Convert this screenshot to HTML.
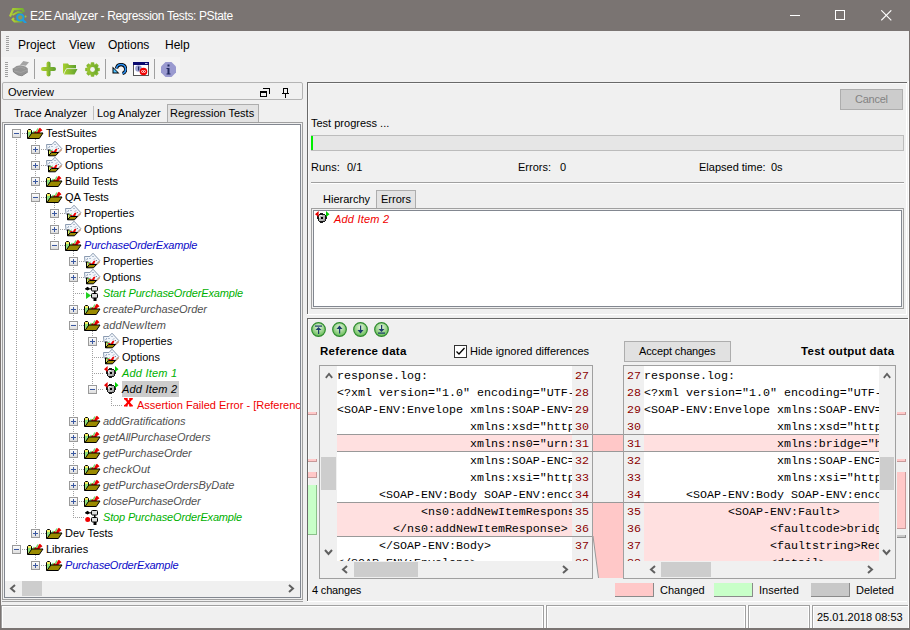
<!DOCTYPE html><html><head><meta charset="utf-8"><style>html,body{margin:0;padding:0;width:910px;height:630px;overflow:hidden;background:#f0f0f0;position:relative}</style></head><body>
<div style="position:absolute;left:0px;top:0px;width:910px;height:31px;background:#7a7472"></div>
<svg style="position:absolute;left:8px;top:7px" width="19" height="16" viewBox="0 0 19 16" shape-rendering="crispEdges"><g shape-rendering="geometricPrecision"><defs><linearGradient id="ga" x1="0" y1="0" x2="1" y2="0"><stop offset="0" stop-color="#b4d232"/><stop offset="1" stop-color="#70b030"/></linearGradient></defs><path d="M2 9.5 L5.2 2.2 L14.5 2.2 L16 5" fill="none" stroke="url(#ga)" stroke-width="2.2"/><path d="M4.5 8 L10 5 L14.5 5.8" fill="none" stroke="url(#ga)" stroke-width="1.8"/><path d="M6 11 L4.6 12.5 L6.5 14.5 L14 14.5" fill="none" stroke="url(#ga)" stroke-width="2"/><circle cx="17.5" cy="9.5" r="1" fill="#a0c830"/><circle cx="12.3" cy="10.5" r="3.2" fill="#a0b838" fill-opacity="0.5" stroke="#1e9ee0" stroke-width="1.8"/><path d="M14.5 12.8 L17.5 15.5" stroke="#1e9ee0" stroke-width="2.2" stroke-linecap="round"/></g></svg>
<div style="position:absolute;left:30px;top:10px;font-family:'Liberation Sans', sans-serif;font-size:12px;line-height:1;font-weight:400;font-style:normal;color:#ffffff;white-space:pre;letter-spacing:-0.37px;">E2E Analyzer - Regression Tests: PState</div>
<div style="position:absolute;left:790px;top:15px;width:10px;height:1px;background:#fff"></div>
<div style="position:absolute;left:835px;top:10px;width:10px;height:10px;border:1px solid #fff;box-sizing:border-box"></div>
<svg style="position:absolute;left:881px;top:10px" width="11" height="11" viewBox="0 0 11 11" shape-rendering="crispEdges"><g shape-rendering="geometricPrecision"><line x1="0.3" y1="0.3" x2="10.3" y2="10.3" stroke="#fff" stroke-width="1.1"/><line x1="10.3" y1="0.3" x2="0.3" y2="10.3" stroke="#fff" stroke-width="1.1"/></g></svg>
<div style="position:absolute;left:6px;top:36px;width:3px;height:1px;background:#a0a0a0"></div>
<div style="position:absolute;left:6px;top:38px;width:3px;height:1px;background:#a0a0a0"></div>
<div style="position:absolute;left:6px;top:40px;width:3px;height:1px;background:#a0a0a0"></div>
<div style="position:absolute;left:6px;top:42px;width:3px;height:1px;background:#a0a0a0"></div>
<div style="position:absolute;left:6px;top:44px;width:3px;height:1px;background:#a0a0a0"></div>
<div style="position:absolute;left:6px;top:46px;width:3px;height:1px;background:#a0a0a0"></div>
<div style="position:absolute;left:6px;top:48px;width:3px;height:1px;background:#a0a0a0"></div>
<div style="position:absolute;left:6px;top:50px;width:3px;height:1px;background:#a0a0a0"></div>
<div style="position:absolute;left:18px;top:39px;font-family:'Liberation Sans', sans-serif;font-size:12px;line-height:1;font-weight:400;font-style:normal;color:#000;white-space:pre;">Project</div>
<div style="position:absolute;left:69px;top:39px;font-family:'Liberation Sans', sans-serif;font-size:12px;line-height:1;font-weight:400;font-style:normal;color:#000;white-space:pre;">View</div>
<div style="position:absolute;left:108px;top:39px;font-family:'Liberation Sans', sans-serif;font-size:12px;line-height:1;font-weight:400;font-style:normal;color:#000;white-space:pre;">Options</div>
<div style="position:absolute;left:165px;top:39px;font-family:'Liberation Sans', sans-serif;font-size:12px;line-height:1;font-weight:400;font-style:normal;color:#000;white-space:pre;">Help</div>
<div style="position:absolute;left:1px;top:57px;width:179px;height:24px;background:#f4f4f4"></div>
<div style="position:absolute;left:5px;top:62px;width:3px;height:1px;background:#a0a0a0"></div>
<div style="position:absolute;left:5px;top:64px;width:3px;height:1px;background:#a0a0a0"></div>
<div style="position:absolute;left:5px;top:66px;width:3px;height:1px;background:#a0a0a0"></div>
<div style="position:absolute;left:5px;top:68px;width:3px;height:1px;background:#a0a0a0"></div>
<div style="position:absolute;left:5px;top:70px;width:3px;height:1px;background:#a0a0a0"></div>
<div style="position:absolute;left:5px;top:72px;width:3px;height:1px;background:#a0a0a0"></div>
<div style="position:absolute;left:5px;top:74px;width:3px;height:1px;background:#a0a0a0"></div>
<div style="position:absolute;left:5px;top:76px;width:3px;height:1px;background:#a0a0a0"></div>
<div style="position:absolute;left:34px;top:59px;width:1px;height:20px;background:#a0a0a0"></div>
<div style="position:absolute;left:105px;top:59px;width:1px;height:20px;background:#a0a0a0"></div>
<div style="position:absolute;left:154px;top:59px;width:1px;height:20px;background:#a0a0a0"></div>
<svg style="position:absolute;left:12px;top:60px" width="18" height="17" viewBox="0 0 18 17" shape-rendering="crispEdges"><g shape-rendering="geometricPrecision"><path d="M8 5 L11.3 1 L17 2.3 L13.9 5.8 Z" fill="#a4a4a4"/><path d="M1 8.5 L4.5 6 L8.5 5.2 L13.5 6.5 L15.8 8.5 L15.8 12 L10 15.8 L6 15 L1.5 12 Z" fill="#949494"/><path d="M3 8.5 L8.5 7 L13 8.5 M2 11 L9 12.5 L15 10" fill="none" stroke="#a6a6a6" stroke-width="0.8"/><path d="M1 8.5 L1.5 12 L6 15 L10 15.8 L15.8 12" fill="none" stroke="#808080" stroke-width="0.9"/></g></svg>
<svg style="position:absolute;left:41px;top:61px" width="15" height="16" viewBox="0 0 15 16" shape-rendering="crispEdges"><g shape-rendering="geometricPrecision"><defs><linearGradient id="gp" x1="0" y1="0" x2="1" y2="0"><stop offset="0" stop-color="#b0d030"/><stop offset="1" stop-color="#5ea02e"/></linearGradient></defs><rect x="5.5" y="0.5" width="4" height="15" rx="2" fill="url(#gp)"/><rect x="0" y="6" width="15" height="4" rx="2" fill="url(#gp)"/></g></svg>
<svg style="position:absolute;left:63px;top:63px" width="15" height="12" viewBox="0 0 15 12" shape-rendering="crispEdges"><g shape-rendering="geometricPrecision"><defs><linearGradient id="gf" x1="0" y1="0" x2="1" y2="0"><stop offset="0" stop-color="#a8d030"/><stop offset="1" stop-color="#5ea02e"/></linearGradient></defs><path d="M0 0.5 L5 0.5 L6 2 L13 2 L13 6 L0 11 Z" fill="url(#gf)"/><path d="M1 11.5 L4 6 L14.5 6 L11.5 11.5 Z" fill="url(#gf)"/><path d="M0.5 11 L3.6 5.6 L13 5.6" fill="none" stroke="#f4f4f4" stroke-width="0.8"/></g></svg>
<svg style="position:absolute;left:85px;top:62px" width="15" height="15" viewBox="0 0 15 15" shape-rendering="crispEdges"><g shape-rendering="geometricPrecision"><defs><linearGradient id="gg" gradientUnits="userSpaceOnUse" x1="-7" y1="0" x2="7" y2="0"><stop offset="0" stop-color="#a8cc30"/><stop offset="1" stop-color="#62a42e"/></linearGradient></defs><g transform="translate(7.5,7.5)"><rect x="-1.8" y="-7.3" width="3.6" height="14.6" rx="0.8" fill="url(#gg)" transform="rotate(0)"/><rect x="-1.8" y="-7.3" width="3.6" height="14.6" rx="0.8" fill="url(#gg)" transform="rotate(45)"/><rect x="-1.8" y="-7.3" width="3.6" height="14.6" rx="0.8" fill="url(#gg)" transform="rotate(90)"/><rect x="-1.8" y="-7.3" width="3.6" height="14.6" rx="0.8" fill="url(#gg)" transform="rotate(135)"/><circle r="5.6" fill="url(#gg)"/><circle r="2.4" fill="#f4f4f4"/></g></g></svg>
<svg style="position:absolute;left:112px;top:63px" width="15" height="12" viewBox="0 0 15 12" shape-rendering="crispEdges"><g shape-rendering="geometricPrecision"><path d="M4.5 5.5 A4.6 4.6 0 1 1 10.5 10.5" fill="none" stroke="#000" stroke-width="3.2"/><path d="M4.5 5.5 A4.6 4.6 0 1 1 10.5 10.5" fill="none" stroke="#2a8ef0" stroke-width="1.6"/><path d="M0.5 3.5 L0.5 10.5 L7.5 10.5 Z" fill="#000"/><path d="M1.5 5.5 L1.5 9.5 L5.5 9.5 Z" fill="#50c0ff"/></g></svg>
<svg style="position:absolute;left:133px;top:62px" width="16" height="14" viewBox="0 0 16 14" shape-rendering="crispEdges"><g shape-rendering="geometricPrecision"><rect x="0.5" y="0.5" width="15" height="13" fill="#fff" stroke="#555" stroke-width="1"/><rect x="0" y="0" width="16" height="3" fill="#0a0a6e"/><rect x="12" y="1" width="2.5" height="1" fill="#c0c0e0"/><circle cx="5.5" cy="6.5" r="3.3" fill="#9aa0d0"/><rect x="5" y="4.5" width="1.2" height="4" fill="#222a60"/><circle cx="10.5" cy="9.5" r="3.8" fill="#f00000"/><path d="M8.5 9.5 a1 1 0 1 0 2 0 a1 1 0 1 0 -2 0 M10.5 9.5 a1 1 0 1 0 2 0 a1 1 0 1 0 -2 0" fill="none" stroke="#fff" stroke-width="0.8"/></g></svg>
<svg style="position:absolute;left:161px;top:62px" width="15" height="15" viewBox="0 0 15 15" shape-rendering="crispEdges"><g shape-rendering="geometricPrecision"><path d="M4.5 0 L10.5 0 L15 4.5 L15 10.5 L10.5 15 L4.5 15 L0 10.5 L0 4.5 Z" fill="#9a9ad0"/><rect x="6.5" y="2.5" width="2" height="2" fill="#222a60"/><path d="M5.5 6 L8.5 6 L8.5 11.5 L9.5 11.5 L9.5 12.5 L5.5 12.5 L5.5 11.5 L6.5 11.5 L6.5 7 L5.5 7 Z" fill="#222a60"/></g></svg>
<div style="position:absolute;left:2px;top:82px;width:301px;height:18px;border:1px solid #b4b4b4;box-sizing:border-box;border-radius:2px;background:#f0f0f0"></div>
<div style="position:absolute;left:8px;top:87px;font-family:'Liberation Sans', sans-serif;font-size:11px;line-height:1;font-weight:400;font-style:normal;color:#000;white-space:pre;">Overview</div>
<div style="position:absolute;left:263px;top:88px;width:7px;height:1px;background:#000"></div>
<div style="position:absolute;left:269px;top:88px;width:1px;height:6px;background:#000"></div>
<div style="position:absolute;left:260px;top:91px;width:7px;height:2px;background:#000"></div>
<div style="position:absolute;left:260px;top:91px;width:1px;height:6px;background:#000"></div>
<div style="position:absolute;left:266px;top:91px;width:1px;height:6px;background:#000"></div>
<div style="position:absolute;left:260px;top:96px;width:7px;height:1px;background:#000"></div>
<div style="position:absolute;left:283px;top:88px;width:5px;height:1px;background:#000"></div>
<div style="position:absolute;left:283px;top:88px;width:1px;height:6px;background:#000"></div>
<div style="position:absolute;left:287px;top:88px;width:1px;height:6px;background:#000"></div>
<div style="position:absolute;left:282px;top:93px;width:7px;height:1px;background:#000"></div>
<div style="position:absolute;left:285px;top:94px;width:1px;height:4px;background:#000"></div>
<div style="position:absolute;left:14px;top:108px;font-family:'Liberation Sans', sans-serif;font-size:11px;line-height:1;font-weight:400;font-style:normal;color:#000;white-space:pre;">Trace Analyzer</div>
<div style="position:absolute;left:93px;top:106px;width:1px;height:14px;background:#c0c0c0"></div>
<div style="position:absolute;left:97px;top:108px;font-family:'Liberation Sans', sans-serif;font-size:11px;line-height:1;font-weight:400;font-style:normal;color:#000;white-space:pre;">Log Analyzer</div>
<div style="position:absolute;left:167px;top:104px;width:92px;height:19px;background:#e3e3e3;border:1px solid #adadad;border-bottom:none;box-sizing:border-box"></div>
<div style="position:absolute;left:170px;top:108px;font-family:'Liberation Sans', sans-serif;font-size:11px;line-height:1;font-weight:400;font-style:normal;color:#000;white-space:pre;">Regression Tests</div>
<div style="position:absolute;left:2px;top:122px;width:301px;height:478px;border:1px solid #a0a0a0;box-sizing:border-box"></div>
<div style="position:absolute;left:4px;top:124px;width:297px;height:474px;border:1px solid #828790;box-sizing:border-box;background:#fff"></div>
<div style="position:absolute;left:2px;top:601px;width:301px;height:1px;background:#a0a0a0"></div>
<div style="position:absolute;left:5px;top:581px;width:295px;height:16px;background:#f0f0f0"></div>
<svg style="position:absolute;left:9px;top:584px" width="8" height="9" viewBox="0 0 8 9" shape-rendering="crispEdges"><path d="M6 1 L2 4.5 L6 8" fill="none" stroke="#606060" stroke-width="2" shape-rendering="geometricPrecision"/></svg>
<div style="position:absolute;left:22px;top:581px;width:20px;height:15px;background:#cdcdcd"></div>
<svg style="position:absolute;left:287px;top:584px" width="8" height="9" viewBox="0 0 8 9" shape-rendering="crispEdges"><path d="M2 1 L6 4.5 L2 8" fill="none" stroke="#606060" stroke-width="2" shape-rendering="geometricPrecision"/></svg>
<div style="position:absolute;left:5px;top:125px;width:295px;height:455px;overflow:hidden">
<div style="position:absolute;left:30px;top:14px;width:1px;height:395px;background:repeating-linear-gradient(to bottom,#a0a0a0 0 1px,transparent 1px 2px)"></div>
<div style="position:absolute;left:49px;top:78px;width:1px;height:43px;background:repeating-linear-gradient(to bottom,#a0a0a0 0 1px,transparent 1px 2px)"></div>
<div style="position:absolute;left:68px;top:126px;width:1px;height:267px;background:repeating-linear-gradient(to bottom,#a0a0a0 0 1px,transparent 1px 2px)"></div>
<div style="position:absolute;left:87px;top:206px;width:1px;height:59px;background:repeating-linear-gradient(to bottom,#a0a0a0 0 1px,transparent 1px 2px)"></div>
<div style="position:absolute;left:106px;top:272px;width:1px;height:9px;background:repeating-linear-gradient(to bottom,#a0a0a0 0 1px,transparent 1px 2px)"></div>
<div style="position:absolute;left:30px;top:430px;width:1px;height:11px;background:repeating-linear-gradient(to bottom,#a0a0a0 0 1px,transparent 1px 2px)"></div>
<div style="position:absolute;left:11px;top:14px;width:1px;height:405px;background:repeating-linear-gradient(to bottom,#a0a0a0 0 1px,transparent 1px 2px)"></div>
<div style="position:absolute;left:11px;top:8px;width:11px;height:1px;background:repeating-linear-gradient(to right,#a0a0a0 0 1px,transparent 1px 2px)"></div>
<svg style="position:absolute;left:7px;top:4px" width="9" height="9" viewBox="0 0 9 9" shape-rendering="crispEdges"><defs><linearGradient id="eg" x1="0" y1="0" x2="0" y2="1"><stop offset="0" stop-color="#fff"/><stop offset="1" stop-color="#dcdcdc"/></linearGradient></defs><rect x="0.5" y="0.5" width="8" height="8" rx="1" fill="url(#eg)" stroke="#9a9a9a"/><rect x="2" y="4" width="5" height="1" fill="#3a58a0"/></svg>
<svg style="position:absolute;left:22px;top:2px" width="17" height="13" viewBox="0 0 17 13" shape-rendering="crispEdges"><g shape-rendering="geometricPrecision"><path d="M0.5 3.5 L1.5 2.5 L3.5 2.5 L4.5 3.5 L4.5 11.5 L0.5 11.5 Z" fill="#f8f060" stroke="#000" stroke-width="1"/><path d="M1.2 5 L3.8 5 L3.8 9.5 L1.2 9.5 Z" fill="#80e080"/><path d="M4 8 L7 4.5 L8.5 6 L11 1.5" fill="none" stroke="#70e070" stroke-width="1.5"/><path d="M6.5 6.5 L8.5 4 L9.8 5.5 L12 1.5 L13 0.8 L15.5 3.3 L13 5 L12.5 6.5 Z" fill="#e80000"/><path d="M1 11.5 L4.8 6 L16 6 L12.3 11.5 Z" fill="#9a8a00" stroke="#000" stroke-width="1"/></g></svg>
<div style="position:absolute;left:41px;top:3px;font-family:'Liberation Sans', sans-serif;font-size:11px;line-height:1;font-weight:400;font-style:normal;color:#000;white-space:pre;">TestSuites</div>
<div style="position:absolute;left:30px;top:24px;width:11px;height:1px;background:repeating-linear-gradient(to right,#a0a0a0 0 1px,transparent 1px 2px)"></div>
<svg style="position:absolute;left:26px;top:20px" width="9" height="9" viewBox="0 0 9 9" shape-rendering="crispEdges"><defs><linearGradient id="eg" x1="0" y1="0" x2="0" y2="1"><stop offset="0" stop-color="#fff"/><stop offset="1" stop-color="#dcdcdc"/></linearGradient></defs><rect x="0.5" y="0.5" width="8" height="8" rx="1" fill="url(#eg)" stroke="#9a9a9a"/><rect x="2" y="4" width="5" height="1" fill="#3a58a0"/><rect x="4" y="2" width="1" height="5" fill="#3a58a0"/></svg>
<svg style="position:absolute;left:41px;top:15px" width="17" height="17" viewBox="0 0 17 17" shape-rendering="crispEdges"><g shape-rendering="geometricPrecision"><path d="M0.5 4.5 L6 4.5 L9 1.2 L15.8 8.6 L12 12.5 L1 10 Z" fill="#f2f6fb" stroke="#8a9ab0" stroke-width="1"/><path d="M2.5 7.5 L4 6.5 M6 6 L6 7 M8.5 5 L9.5 4 M10 7.5 L11 6.5 M12 9 L13 8" stroke="#7088a8" stroke-width="1"/><path d="M12 12.5 L15.8 8.6 L15.8 10.5 L12.5 13.5 Z" fill="#c89878"/><path d="M2 9.5 L4.5 9.5 L4.5 16 L2 16 Z" fill="#000"/><path d="M3 10.5 L4.3 10.5 L4.3 14 L3 14 Z" fill="#d8e860"/><path d="M4.5 12 L6 10.5 L7.5 12 L9.5 9 L11.5 8.5 L10 12.5 Z" fill="#ee0000"/><path d="M4 11.5 L6.5 9.8" stroke="#60e060" stroke-width="1"/><path d="M2.5 15.8 L5.5 12.5 L12.5 12.5 L9.5 15.8 Z" fill="#9a8a00" stroke="#000" stroke-width="1"/></g></svg>
<div style="position:absolute;left:60px;top:19px;font-family:'Liberation Sans', sans-serif;font-size:11px;line-height:1;font-weight:400;font-style:normal;color:#000;white-space:pre;">Properties</div>
<div style="position:absolute;left:30px;top:40px;width:11px;height:1px;background:repeating-linear-gradient(to right,#a0a0a0 0 1px,transparent 1px 2px)"></div>
<svg style="position:absolute;left:26px;top:36px" width="9" height="9" viewBox="0 0 9 9" shape-rendering="crispEdges"><defs><linearGradient id="eg" x1="0" y1="0" x2="0" y2="1"><stop offset="0" stop-color="#fff"/><stop offset="1" stop-color="#dcdcdc"/></linearGradient></defs><rect x="0.5" y="0.5" width="8" height="8" rx="1" fill="url(#eg)" stroke="#9a9a9a"/><rect x="2" y="4" width="5" height="1" fill="#3a58a0"/><rect x="4" y="2" width="1" height="5" fill="#3a58a0"/></svg>
<svg style="position:absolute;left:41px;top:31px" width="17" height="17" viewBox="0 0 17 17" shape-rendering="crispEdges"><g shape-rendering="geometricPrecision"><path d="M0.5 4.5 L6 4.5 L9 1.2 L15.8 8.6 L12 12.5 L1 10 Z" fill="#f2f6fb" stroke="#8a9ab0" stroke-width="1"/><path d="M2.5 7.5 L4 6.5 M6 6 L6 7 M8.5 5 L9.5 4 M10 7.5 L11 6.5 M12 9 L13 8" stroke="#7088a8" stroke-width="1"/><path d="M12 12.5 L15.8 8.6 L15.8 10.5 L12.5 13.5 Z" fill="#c89878"/><path d="M2 9.5 L4.5 9.5 L4.5 16 L2 16 Z" fill="#000"/><path d="M3 10.5 L4.3 10.5 L4.3 14 L3 14 Z" fill="#d8e860"/><path d="M4.5 12 L6 10.5 L7.5 12 L9.5 9 L11.5 8.5 L10 12.5 Z" fill="#ee0000"/><path d="M4 11.5 L6.5 9.8" stroke="#60e060" stroke-width="1"/><path d="M2.5 15.8 L5.5 12.5 L12.5 12.5 L9.5 15.8 Z" fill="#9a8a00" stroke="#000" stroke-width="1"/></g></svg>
<div style="position:absolute;left:60px;top:35px;font-family:'Liberation Sans', sans-serif;font-size:11px;line-height:1;font-weight:400;font-style:normal;color:#000;white-space:pre;">Options</div>
<div style="position:absolute;left:30px;top:56px;width:11px;height:1px;background:repeating-linear-gradient(to right,#a0a0a0 0 1px,transparent 1px 2px)"></div>
<svg style="position:absolute;left:26px;top:52px" width="9" height="9" viewBox="0 0 9 9" shape-rendering="crispEdges"><defs><linearGradient id="eg" x1="0" y1="0" x2="0" y2="1"><stop offset="0" stop-color="#fff"/><stop offset="1" stop-color="#dcdcdc"/></linearGradient></defs><rect x="0.5" y="0.5" width="8" height="8" rx="1" fill="url(#eg)" stroke="#9a9a9a"/><rect x="2" y="4" width="5" height="1" fill="#3a58a0"/><rect x="4" y="2" width="1" height="5" fill="#3a58a0"/></svg>
<svg style="position:absolute;left:41px;top:50px" width="17" height="13" viewBox="0 0 17 13" shape-rendering="crispEdges"><g shape-rendering="geometricPrecision"><path d="M0.5 3.5 L1.5 2.5 L3.5 2.5 L4.5 3.5 L4.5 11.5 L0.5 11.5 Z" fill="#f8f060" stroke="#000" stroke-width="1"/><path d="M1.2 5 L3.8 5 L3.8 9.5 L1.2 9.5 Z" fill="#80e080"/><path d="M4 8 L7 4.5 L8.5 6 L11 1.5" fill="none" stroke="#70e070" stroke-width="1.5"/><path d="M6.5 6.5 L8.5 4 L9.8 5.5 L12 1.5 L13 0.8 L15.5 3.3 L13 5 L12.5 6.5 Z" fill="#e80000"/><path d="M1 11.5 L4.8 6 L16 6 L12.3 11.5 Z" fill="#9a8a00" stroke="#000" stroke-width="1"/></g></svg>
<div style="position:absolute;left:60px;top:51px;font-family:'Liberation Sans', sans-serif;font-size:11px;line-height:1;font-weight:400;font-style:normal;color:#000;white-space:pre;">Build Tests</div>
<div style="position:absolute;left:30px;top:72px;width:11px;height:1px;background:repeating-linear-gradient(to right,#a0a0a0 0 1px,transparent 1px 2px)"></div>
<svg style="position:absolute;left:26px;top:68px" width="9" height="9" viewBox="0 0 9 9" shape-rendering="crispEdges"><defs><linearGradient id="eg" x1="0" y1="0" x2="0" y2="1"><stop offset="0" stop-color="#fff"/><stop offset="1" stop-color="#dcdcdc"/></linearGradient></defs><rect x="0.5" y="0.5" width="8" height="8" rx="1" fill="url(#eg)" stroke="#9a9a9a"/><rect x="2" y="4" width="5" height="1" fill="#3a58a0"/></svg>
<svg style="position:absolute;left:41px;top:66px" width="17" height="13" viewBox="0 0 17 13" shape-rendering="crispEdges"><g shape-rendering="geometricPrecision"><path d="M0.5 3.5 L1.5 2.5 L3.5 2.5 L4.5 3.5 L4.5 11.5 L0.5 11.5 Z" fill="#f8f060" stroke="#000" stroke-width="1"/><path d="M1.2 5 L3.8 5 L3.8 9.5 L1.2 9.5 Z" fill="#80e080"/><path d="M4 8 L7 4.5 L8.5 6 L11 1.5" fill="none" stroke="#70e070" stroke-width="1.5"/><path d="M6.5 6.5 L8.5 4 L9.8 5.5 L12 1.5 L13 0.8 L15.5 3.3 L13 5 L12.5 6.5 Z" fill="#e80000"/><path d="M1 11.5 L4.8 6 L16 6 L12.3 11.5 Z" fill="#9a8a00" stroke="#000" stroke-width="1"/></g></svg>
<div style="position:absolute;left:60px;top:67px;font-family:'Liberation Sans', sans-serif;font-size:11px;line-height:1;font-weight:400;font-style:normal;color:#000;white-space:pre;">QA Tests</div>
<div style="position:absolute;left:49px;top:88px;width:11px;height:1px;background:repeating-linear-gradient(to right,#a0a0a0 0 1px,transparent 1px 2px)"></div>
<svg style="position:absolute;left:45px;top:84px" width="9" height="9" viewBox="0 0 9 9" shape-rendering="crispEdges"><defs><linearGradient id="eg" x1="0" y1="0" x2="0" y2="1"><stop offset="0" stop-color="#fff"/><stop offset="1" stop-color="#dcdcdc"/></linearGradient></defs><rect x="0.5" y="0.5" width="8" height="8" rx="1" fill="url(#eg)" stroke="#9a9a9a"/><rect x="2" y="4" width="5" height="1" fill="#3a58a0"/><rect x="4" y="2" width="1" height="5" fill="#3a58a0"/></svg>
<svg style="position:absolute;left:60px;top:79px" width="17" height="17" viewBox="0 0 17 17" shape-rendering="crispEdges"><g shape-rendering="geometricPrecision"><path d="M0.5 4.5 L6 4.5 L9 1.2 L15.8 8.6 L12 12.5 L1 10 Z" fill="#f2f6fb" stroke="#8a9ab0" stroke-width="1"/><path d="M2.5 7.5 L4 6.5 M6 6 L6 7 M8.5 5 L9.5 4 M10 7.5 L11 6.5 M12 9 L13 8" stroke="#7088a8" stroke-width="1"/><path d="M12 12.5 L15.8 8.6 L15.8 10.5 L12.5 13.5 Z" fill="#c89878"/><path d="M2 9.5 L4.5 9.5 L4.5 16 L2 16 Z" fill="#000"/><path d="M3 10.5 L4.3 10.5 L4.3 14 L3 14 Z" fill="#d8e860"/><path d="M4.5 12 L6 10.5 L7.5 12 L9.5 9 L11.5 8.5 L10 12.5 Z" fill="#ee0000"/><path d="M4 11.5 L6.5 9.8" stroke="#60e060" stroke-width="1"/><path d="M2.5 15.8 L5.5 12.5 L12.5 12.5 L9.5 15.8 Z" fill="#9a8a00" stroke="#000" stroke-width="1"/></g></svg>
<div style="position:absolute;left:79px;top:83px;font-family:'Liberation Sans', sans-serif;font-size:11px;line-height:1;font-weight:400;font-style:normal;color:#000;white-space:pre;">Properties</div>
<div style="position:absolute;left:49px;top:104px;width:11px;height:1px;background:repeating-linear-gradient(to right,#a0a0a0 0 1px,transparent 1px 2px)"></div>
<svg style="position:absolute;left:45px;top:100px" width="9" height="9" viewBox="0 0 9 9" shape-rendering="crispEdges"><defs><linearGradient id="eg" x1="0" y1="0" x2="0" y2="1"><stop offset="0" stop-color="#fff"/><stop offset="1" stop-color="#dcdcdc"/></linearGradient></defs><rect x="0.5" y="0.5" width="8" height="8" rx="1" fill="url(#eg)" stroke="#9a9a9a"/><rect x="2" y="4" width="5" height="1" fill="#3a58a0"/><rect x="4" y="2" width="1" height="5" fill="#3a58a0"/></svg>
<svg style="position:absolute;left:60px;top:95px" width="17" height="17" viewBox="0 0 17 17" shape-rendering="crispEdges"><g shape-rendering="geometricPrecision"><path d="M0.5 4.5 L6 4.5 L9 1.2 L15.8 8.6 L12 12.5 L1 10 Z" fill="#f2f6fb" stroke="#8a9ab0" stroke-width="1"/><path d="M2.5 7.5 L4 6.5 M6 6 L6 7 M8.5 5 L9.5 4 M10 7.5 L11 6.5 M12 9 L13 8" stroke="#7088a8" stroke-width="1"/><path d="M12 12.5 L15.8 8.6 L15.8 10.5 L12.5 13.5 Z" fill="#c89878"/><path d="M2 9.5 L4.5 9.5 L4.5 16 L2 16 Z" fill="#000"/><path d="M3 10.5 L4.3 10.5 L4.3 14 L3 14 Z" fill="#d8e860"/><path d="M4.5 12 L6 10.5 L7.5 12 L9.5 9 L11.5 8.5 L10 12.5 Z" fill="#ee0000"/><path d="M4 11.5 L6.5 9.8" stroke="#60e060" stroke-width="1"/><path d="M2.5 15.8 L5.5 12.5 L12.5 12.5 L9.5 15.8 Z" fill="#9a8a00" stroke="#000" stroke-width="1"/></g></svg>
<div style="position:absolute;left:79px;top:99px;font-family:'Liberation Sans', sans-serif;font-size:11px;line-height:1;font-weight:400;font-style:normal;color:#000;white-space:pre;">Options</div>
<div style="position:absolute;left:49px;top:120px;width:11px;height:1px;background:repeating-linear-gradient(to right,#a0a0a0 0 1px,transparent 1px 2px)"></div>
<svg style="position:absolute;left:45px;top:116px" width="9" height="9" viewBox="0 0 9 9" shape-rendering="crispEdges"><defs><linearGradient id="eg" x1="0" y1="0" x2="0" y2="1"><stop offset="0" stop-color="#fff"/><stop offset="1" stop-color="#dcdcdc"/></linearGradient></defs><rect x="0.5" y="0.5" width="8" height="8" rx="1" fill="url(#eg)" stroke="#9a9a9a"/><rect x="2" y="4" width="5" height="1" fill="#3a58a0"/></svg>
<svg style="position:absolute;left:60px;top:114px" width="17" height="13" viewBox="0 0 17 13" shape-rendering="crispEdges"><g shape-rendering="geometricPrecision"><path d="M0.5 3.5 L1.5 2.5 L3.5 2.5 L4.5 3.5 L4.5 11.5 L0.5 11.5 Z" fill="#f8f060" stroke="#000" stroke-width="1"/><path d="M1.2 5 L3.8 5 L3.8 9.5 L1.2 9.5 Z" fill="#80e080"/><path d="M4 8 L7 4.5 L8.5 6 L11 1.5" fill="none" stroke="#70e070" stroke-width="1.5"/><path d="M6.5 6.5 L8.5 4 L9.8 5.5 L12 1.5 L13 0.8 L15.5 3.3 L13 5 L12.5 6.5 Z" fill="#e80000"/><path d="M1 11.5 L4.8 6 L16 6 L12.3 11.5 Z" fill="#9a8a00" stroke="#000" stroke-width="1"/></g></svg>
<div style="position:absolute;left:79px;top:115px;font-family:'Liberation Sans', sans-serif;font-size:11px;line-height:1;font-weight:400;font-style:italic;color:#0a0ac8;white-space:pre;letter-spacing:-0.21px;">PurchaseOrderExample</div>
<div style="position:absolute;left:68px;top:136px;width:11px;height:1px;background:repeating-linear-gradient(to right,#a0a0a0 0 1px,transparent 1px 2px)"></div>
<svg style="position:absolute;left:64px;top:132px" width="9" height="9" viewBox="0 0 9 9" shape-rendering="crispEdges"><defs><linearGradient id="eg" x1="0" y1="0" x2="0" y2="1"><stop offset="0" stop-color="#fff"/><stop offset="1" stop-color="#dcdcdc"/></linearGradient></defs><rect x="0.5" y="0.5" width="8" height="8" rx="1" fill="url(#eg)" stroke="#9a9a9a"/><rect x="2" y="4" width="5" height="1" fill="#3a58a0"/><rect x="4" y="2" width="1" height="5" fill="#3a58a0"/></svg>
<svg style="position:absolute;left:79px;top:127px" width="17" height="17" viewBox="0 0 17 17" shape-rendering="crispEdges"><g shape-rendering="geometricPrecision"><path d="M0.5 4.5 L6 4.5 L9 1.2 L15.8 8.6 L12 12.5 L1 10 Z" fill="#f2f6fb" stroke="#8a9ab0" stroke-width="1"/><path d="M2.5 7.5 L4 6.5 M6 6 L6 7 M8.5 5 L9.5 4 M10 7.5 L11 6.5 M12 9 L13 8" stroke="#7088a8" stroke-width="1"/><path d="M12 12.5 L15.8 8.6 L15.8 10.5 L12.5 13.5 Z" fill="#c89878"/><path d="M2 9.5 L4.5 9.5 L4.5 16 L2 16 Z" fill="#000"/><path d="M3 10.5 L4.3 10.5 L4.3 14 L3 14 Z" fill="#d8e860"/><path d="M4.5 12 L6 10.5 L7.5 12 L9.5 9 L11.5 8.5 L10 12.5 Z" fill="#ee0000"/><path d="M4 11.5 L6.5 9.8" stroke="#60e060" stroke-width="1"/><path d="M2.5 15.8 L5.5 12.5 L12.5 12.5 L9.5 15.8 Z" fill="#9a8a00" stroke="#000" stroke-width="1"/></g></svg>
<div style="position:absolute;left:98px;top:131px;font-family:'Liberation Sans', sans-serif;font-size:11px;line-height:1;font-weight:400;font-style:normal;color:#000;white-space:pre;">Properties</div>
<div style="position:absolute;left:68px;top:152px;width:11px;height:1px;background:repeating-linear-gradient(to right,#a0a0a0 0 1px,transparent 1px 2px)"></div>
<svg style="position:absolute;left:64px;top:148px" width="9" height="9" viewBox="0 0 9 9" shape-rendering="crispEdges"><defs><linearGradient id="eg" x1="0" y1="0" x2="0" y2="1"><stop offset="0" stop-color="#fff"/><stop offset="1" stop-color="#dcdcdc"/></linearGradient></defs><rect x="0.5" y="0.5" width="8" height="8" rx="1" fill="url(#eg)" stroke="#9a9a9a"/><rect x="2" y="4" width="5" height="1" fill="#3a58a0"/><rect x="4" y="2" width="1" height="5" fill="#3a58a0"/></svg>
<svg style="position:absolute;left:79px;top:143px" width="17" height="17" viewBox="0 0 17 17" shape-rendering="crispEdges"><g shape-rendering="geometricPrecision"><path d="M0.5 4.5 L6 4.5 L9 1.2 L15.8 8.6 L12 12.5 L1 10 Z" fill="#f2f6fb" stroke="#8a9ab0" stroke-width="1"/><path d="M2.5 7.5 L4 6.5 M6 6 L6 7 M8.5 5 L9.5 4 M10 7.5 L11 6.5 M12 9 L13 8" stroke="#7088a8" stroke-width="1"/><path d="M12 12.5 L15.8 8.6 L15.8 10.5 L12.5 13.5 Z" fill="#c89878"/><path d="M2 9.5 L4.5 9.5 L4.5 16 L2 16 Z" fill="#000"/><path d="M3 10.5 L4.3 10.5 L4.3 14 L3 14 Z" fill="#d8e860"/><path d="M4.5 12 L6 10.5 L7.5 12 L9.5 9 L11.5 8.5 L10 12.5 Z" fill="#ee0000"/><path d="M4 11.5 L6.5 9.8" stroke="#60e060" stroke-width="1"/><path d="M2.5 15.8 L5.5 12.5 L12.5 12.5 L9.5 15.8 Z" fill="#9a8a00" stroke="#000" stroke-width="1"/></g></svg>
<div style="position:absolute;left:98px;top:147px;font-family:'Liberation Sans', sans-serif;font-size:11px;line-height:1;font-weight:400;font-style:normal;color:#000;white-space:pre;">Options</div>
<div style="position:absolute;left:68px;top:168px;width:11px;height:1px;background:repeating-linear-gradient(to right,#a0a0a0 0 1px,transparent 1px 2px)"></div>
<svg style="position:absolute;left:80px;top:161px" width="13" height="15" viewBox="0 0 13 15" shape-rendering="crispEdges"><g shape-rendering="geometricPrecision"><path d="M2.5 0.8 L4.2 2 L4.2 3.6 L2.5 4.6 L0.8 3.6 L0.8 2 Z" fill="#000"/><rect x="0" y="2.3" width="7" height="1.1" fill="#000"/><rect x="6.5" y="0.5" width="6" height="4.5" rx="1" fill="#dcdcdc" stroke="#000" stroke-width="1"/><rect x="9" y="5" width="1.5" height="3" fill="#000"/><rect x="6.5" y="7.5" width="6" height="4.5" rx="1" fill="#dcdcdc" stroke="#000" stroke-width="1"/><rect x="8.5" y="12" width="3" height="3" fill="#000"/><path d="M1 6 L6 9.5 L1 13 Z" fill="#20d020"/></g></svg>
<div style="position:absolute;left:98px;top:163px;font-family:'Liberation Sans', sans-serif;font-size:11px;line-height:1;font-weight:400;font-style:italic;color:#00b000;white-space:pre;letter-spacing:-0.14px;">Start PurchaseOrderExample</div>
<div style="position:absolute;left:68px;top:184px;width:11px;height:1px;background:repeating-linear-gradient(to right,#a0a0a0 0 1px,transparent 1px 2px)"></div>
<svg style="position:absolute;left:64px;top:180px" width="9" height="9" viewBox="0 0 9 9" shape-rendering="crispEdges"><defs><linearGradient id="eg" x1="0" y1="0" x2="0" y2="1"><stop offset="0" stop-color="#fff"/><stop offset="1" stop-color="#dcdcdc"/></linearGradient></defs><rect x="0.5" y="0.5" width="8" height="8" rx="1" fill="url(#eg)" stroke="#9a9a9a"/><rect x="2" y="4" width="5" height="1" fill="#3a58a0"/><rect x="4" y="2" width="1" height="5" fill="#3a58a0"/></svg>
<svg style="position:absolute;left:79px;top:178px" width="17" height="13" viewBox="0 0 17 13" shape-rendering="crispEdges"><g shape-rendering="geometricPrecision"><path d="M0.5 3.5 L1.5 2.5 L3.5 2.5 L4.5 3.5 L4.5 11.5 L0.5 11.5 Z" fill="#f8f060" stroke="#000" stroke-width="1"/><path d="M1.2 5 L3.8 5 L3.8 9.5 L1.2 9.5 Z" fill="#80e080"/><path d="M4 8 L7 4.5 L8.5 6 L11 1.5" fill="none" stroke="#70e070" stroke-width="1.5"/><path d="M6.5 6.5 L8.5 4 L9.8 5.5 L12 1.5 L13 0.8 L15.5 3.3 L13 5 L12.5 6.5 Z" fill="#e80000"/><path d="M1 11.5 L4.8 6 L16 6 L12.3 11.5 Z" fill="#9a8a00" stroke="#000" stroke-width="1"/></g></svg>
<div style="position:absolute;left:98px;top:179px;font-family:'Liberation Sans', sans-serif;font-size:11px;line-height:1;font-weight:400;font-style:italic;color:#505050;white-space:pre;letter-spacing:-0.07px;">createPurchaseOrder</div>
<div style="position:absolute;left:68px;top:200px;width:11px;height:1px;background:repeating-linear-gradient(to right,#a0a0a0 0 1px,transparent 1px 2px)"></div>
<svg style="position:absolute;left:64px;top:196px" width="9" height="9" viewBox="0 0 9 9" shape-rendering="crispEdges"><defs><linearGradient id="eg" x1="0" y1="0" x2="0" y2="1"><stop offset="0" stop-color="#fff"/><stop offset="1" stop-color="#dcdcdc"/></linearGradient></defs><rect x="0.5" y="0.5" width="8" height="8" rx="1" fill="url(#eg)" stroke="#9a9a9a"/><rect x="2" y="4" width="5" height="1" fill="#3a58a0"/></svg>
<svg style="position:absolute;left:79px;top:194px" width="17" height="13" viewBox="0 0 17 13" shape-rendering="crispEdges"><g shape-rendering="geometricPrecision"><path d="M0.5 3.5 L1.5 2.5 L3.5 2.5 L4.5 3.5 L4.5 11.5 L0.5 11.5 Z" fill="#f8f060" stroke="#000" stroke-width="1"/><path d="M1.2 5 L3.8 5 L3.8 9.5 L1.2 9.5 Z" fill="#80e080"/><path d="M4 8 L7 4.5 L8.5 6 L11 1.5" fill="none" stroke="#70e070" stroke-width="1.5"/><path d="M6.5 6.5 L8.5 4 L9.8 5.5 L12 1.5 L13 0.8 L15.5 3.3 L13 5 L12.5 6.5 Z" fill="#e80000"/><path d="M1 11.5 L4.8 6 L16 6 L12.3 11.5 Z" fill="#9a8a00" stroke="#000" stroke-width="1"/></g></svg>
<div style="position:absolute;left:98px;top:195px;font-family:'Liberation Sans', sans-serif;font-size:11px;line-height:1;font-weight:400;font-style:italic;color:#505050;white-space:pre;letter-spacing:0.13px;">addNewItem</div>
<div style="position:absolute;left:87px;top:216px;width:11px;height:1px;background:repeating-linear-gradient(to right,#a0a0a0 0 1px,transparent 1px 2px)"></div>
<svg style="position:absolute;left:83px;top:212px" width="9" height="9" viewBox="0 0 9 9" shape-rendering="crispEdges"><defs><linearGradient id="eg" x1="0" y1="0" x2="0" y2="1"><stop offset="0" stop-color="#fff"/><stop offset="1" stop-color="#dcdcdc"/></linearGradient></defs><rect x="0.5" y="0.5" width="8" height="8" rx="1" fill="url(#eg)" stroke="#9a9a9a"/><rect x="2" y="4" width="5" height="1" fill="#3a58a0"/><rect x="4" y="2" width="1" height="5" fill="#3a58a0"/></svg>
<svg style="position:absolute;left:98px;top:207px" width="17" height="17" viewBox="0 0 17 17" shape-rendering="crispEdges"><g shape-rendering="geometricPrecision"><path d="M0.5 4.5 L6 4.5 L9 1.2 L15.8 8.6 L12 12.5 L1 10 Z" fill="#f2f6fb" stroke="#8a9ab0" stroke-width="1"/><path d="M2.5 7.5 L4 6.5 M6 6 L6 7 M8.5 5 L9.5 4 M10 7.5 L11 6.5 M12 9 L13 8" stroke="#7088a8" stroke-width="1"/><path d="M12 12.5 L15.8 8.6 L15.8 10.5 L12.5 13.5 Z" fill="#c89878"/><path d="M2 9.5 L4.5 9.5 L4.5 16 L2 16 Z" fill="#000"/><path d="M3 10.5 L4.3 10.5 L4.3 14 L3 14 Z" fill="#d8e860"/><path d="M4.5 12 L6 10.5 L7.5 12 L9.5 9 L11.5 8.5 L10 12.5 Z" fill="#ee0000"/><path d="M4 11.5 L6.5 9.8" stroke="#60e060" stroke-width="1"/><path d="M2.5 15.8 L5.5 12.5 L12.5 12.5 L9.5 15.8 Z" fill="#9a8a00" stroke="#000" stroke-width="1"/></g></svg>
<div style="position:absolute;left:117px;top:211px;font-family:'Liberation Sans', sans-serif;font-size:11px;line-height:1;font-weight:400;font-style:normal;color:#000;white-space:pre;">Properties</div>
<div style="position:absolute;left:87px;top:232px;width:11px;height:1px;background:repeating-linear-gradient(to right,#a0a0a0 0 1px,transparent 1px 2px)"></div>
<svg style="position:absolute;left:98px;top:223px" width="17" height="17" viewBox="0 0 17 17" shape-rendering="crispEdges"><g shape-rendering="geometricPrecision"><path d="M0.5 4.5 L6 4.5 L9 1.2 L15.8 8.6 L12 12.5 L1 10 Z" fill="#f2f6fb" stroke="#8a9ab0" stroke-width="1"/><path d="M2.5 7.5 L4 6.5 M6 6 L6 7 M8.5 5 L9.5 4 M10 7.5 L11 6.5 M12 9 L13 8" stroke="#7088a8" stroke-width="1"/><path d="M12 12.5 L15.8 8.6 L15.8 10.5 L12.5 13.5 Z" fill="#c89878"/><path d="M2 9.5 L4.5 9.5 L4.5 16 L2 16 Z" fill="#000"/><path d="M3 10.5 L4.3 10.5 L4.3 14 L3 14 Z" fill="#d8e860"/><path d="M4.5 12 L6 10.5 L7.5 12 L9.5 9 L11.5 8.5 L10 12.5 Z" fill="#ee0000"/><path d="M4 11.5 L6.5 9.8" stroke="#60e060" stroke-width="1"/><path d="M2.5 15.8 L5.5 12.5 L12.5 12.5 L9.5 15.8 Z" fill="#9a8a00" stroke="#000" stroke-width="1"/></g></svg>
<div style="position:absolute;left:117px;top:227px;font-family:'Liberation Sans', sans-serif;font-size:11px;line-height:1;font-weight:400;font-style:normal;color:#000;white-space:pre;">Options</div>
<div style="position:absolute;left:87px;top:248px;width:11px;height:1px;background:repeating-linear-gradient(to right,#a0a0a0 0 1px,transparent 1px 2px)"></div>
<svg style="position:absolute;left:99px;top:241px" width="15" height="13" viewBox="0 0 15 13" shape-rendering="crispEdges"><rect x="3" y="3" width="8" height="8" fill="#1a1a1a"/><rect x="4" y="4" width="6" height="6" fill="#b4b4b4"/><rect x="2" y="5" width="1" height="3" fill="#1a1a1a"/><rect x="11" y="5" width="1" height="3" fill="#1a1a1a"/><rect x="5" y="2" width="3" height="1" fill="#1a1a1a"/><rect x="5" y="11" width="3" height="1" fill="#1a1a1a"/><rect x="3" y="3" width="1" height="1" fill="#fff"/><rect x="10" y="3" width="1" height="1" fill="#fff"/><rect x="3" y="10" width="1" height="1" fill="#fff"/><rect x="10" y="10" width="1" height="1" fill="#fff"/><rect x="4" y="5" width="1" height="2" fill="#f0f0f0"/><rect x="5" y="4" width="2" height="1" fill="#f0f0f0"/><rect x="8" y="9" width="2" height="1" fill="#909090"/><rect x="9" y="8" width="1" height="1" fill="#909090"/><rect x="6" y="6" width="2" height="2" fill="#000"/><g shape-rendering="geometricPrecision"><path d="M0 3.2 L3.6 0 L3.6 6 Z" fill="#e80000"/><path d="M14.5 3.2 L11 0 L11 6 Z" fill="#00d000"/></g></svg>
<div style="position:absolute;left:117px;top:243px;font-family:'Liberation Sans', sans-serif;font-size:11px;line-height:1;font-weight:400;font-style:italic;color:#00b000;white-space:pre;letter-spacing:0.2px;">Add Item 1</div>
<div style="position:absolute;left:87px;top:264px;width:11px;height:1px;background:repeating-linear-gradient(to right,#a0a0a0 0 1px,transparent 1px 2px)"></div>
<svg style="position:absolute;left:83px;top:260px" width="9" height="9" viewBox="0 0 9 9" shape-rendering="crispEdges"><defs><linearGradient id="eg" x1="0" y1="0" x2="0" y2="1"><stop offset="0" stop-color="#fff"/><stop offset="1" stop-color="#dcdcdc"/></linearGradient></defs><rect x="0.5" y="0.5" width="8" height="8" rx="1" fill="url(#eg)" stroke="#9a9a9a"/><rect x="2" y="4" width="5" height="1" fill="#3a58a0"/></svg>
<div style="position:absolute;left:117px;top:256px;width:57px;height:16px;background:#cccccc"></div>
<svg style="position:absolute;left:99px;top:257px" width="15" height="13" viewBox="0 0 15 13" shape-rendering="crispEdges"><rect x="3" y="3" width="8" height="8" fill="#1a1a1a"/><rect x="4" y="4" width="6" height="6" fill="#b4b4b4"/><rect x="2" y="5" width="1" height="3" fill="#1a1a1a"/><rect x="11" y="5" width="1" height="3" fill="#1a1a1a"/><rect x="5" y="2" width="3" height="1" fill="#1a1a1a"/><rect x="5" y="11" width="3" height="1" fill="#1a1a1a"/><rect x="3" y="3" width="1" height="1" fill="#fff"/><rect x="10" y="3" width="1" height="1" fill="#fff"/><rect x="3" y="10" width="1" height="1" fill="#fff"/><rect x="10" y="10" width="1" height="1" fill="#fff"/><rect x="4" y="5" width="1" height="2" fill="#f0f0f0"/><rect x="5" y="4" width="2" height="1" fill="#f0f0f0"/><rect x="8" y="9" width="2" height="1" fill="#909090"/><rect x="9" y="8" width="1" height="1" fill="#909090"/><rect x="6" y="6" width="2" height="2" fill="#000"/><g shape-rendering="geometricPrecision"><path d="M0 3.2 L3.6 0 L3.6 6 Z" fill="#e80000"/><path d="M14.5 3.2 L11 0 L11 6 Z" fill="#00d000"/></g></svg>
<div style="position:absolute;left:117px;top:259px;font-family:'Liberation Sans', sans-serif;font-size:11px;line-height:1;font-weight:400;font-style:italic;color:#000;white-space:pre;letter-spacing:0.2px;">Add Item 2</div>
<div style="position:absolute;left:106px;top:280px;width:11px;height:1px;background:repeating-linear-gradient(to right,#a0a0a0 0 1px,transparent 1px 2px)"></div>
<svg style="position:absolute;left:119px;top:273px" width="9" height="9" viewBox="0 0 9 9" shape-rendering="crispEdges"><g shape-rendering="geometricPrecision"><path d="M1.6 0.8 L7.4 7.7 M7.4 0.8 L1.6 7.7" stroke="#ff0000" stroke-width="2.1"/><rect x="0" y="0" width="3.6" height="1.6" fill="#ff0000"/><rect x="5.2" y="0" width="3.6" height="1.6" fill="#ff0000"/><rect x="0" y="6.9" width="3.6" height="1.6" fill="#ff0000"/><rect x="5.2" y="6.9" width="3.6" height="1.6" fill="#ff0000"/></g></svg>
<div style="position:absolute;left:132px;top:275px;font-family:'Liberation Sans', sans-serif;font-size:11px;line-height:1;font-weight:400;font-style:normal;color:#f00000;white-space:pre;">Assertion Failed Error - [Reference Data]</div>
<div style="position:absolute;left:68px;top:296px;width:11px;height:1px;background:repeating-linear-gradient(to right,#a0a0a0 0 1px,transparent 1px 2px)"></div>
<svg style="position:absolute;left:64px;top:292px" width="9" height="9" viewBox="0 0 9 9" shape-rendering="crispEdges"><defs><linearGradient id="eg" x1="0" y1="0" x2="0" y2="1"><stop offset="0" stop-color="#fff"/><stop offset="1" stop-color="#dcdcdc"/></linearGradient></defs><rect x="0.5" y="0.5" width="8" height="8" rx="1" fill="url(#eg)" stroke="#9a9a9a"/><rect x="2" y="4" width="5" height="1" fill="#3a58a0"/><rect x="4" y="2" width="1" height="5" fill="#3a58a0"/></svg>
<svg style="position:absolute;left:79px;top:290px" width="17" height="13" viewBox="0 0 17 13" shape-rendering="crispEdges"><g shape-rendering="geometricPrecision"><path d="M0.5 3.5 L1.5 2.5 L3.5 2.5 L4.5 3.5 L4.5 11.5 L0.5 11.5 Z" fill="#f8f060" stroke="#000" stroke-width="1"/><path d="M1.2 5 L3.8 5 L3.8 9.5 L1.2 9.5 Z" fill="#80e080"/><path d="M4 8 L7 4.5 L8.5 6 L11 1.5" fill="none" stroke="#70e070" stroke-width="1.5"/><path d="M6.5 6.5 L8.5 4 L9.8 5.5 L12 1.5 L13 0.8 L15.5 3.3 L13 5 L12.5 6.5 Z" fill="#e80000"/><path d="M1 11.5 L4.8 6 L16 6 L12.3 11.5 Z" fill="#9a8a00" stroke="#000" stroke-width="1"/></g></svg>
<div style="position:absolute;left:98px;top:291px;font-family:'Liberation Sans', sans-serif;font-size:11px;line-height:1;font-weight:400;font-style:italic;color:#505050;white-space:pre;">addGratifications</div>
<div style="position:absolute;left:68px;top:312px;width:11px;height:1px;background:repeating-linear-gradient(to right,#a0a0a0 0 1px,transparent 1px 2px)"></div>
<svg style="position:absolute;left:64px;top:308px" width="9" height="9" viewBox="0 0 9 9" shape-rendering="crispEdges"><defs><linearGradient id="eg" x1="0" y1="0" x2="0" y2="1"><stop offset="0" stop-color="#fff"/><stop offset="1" stop-color="#dcdcdc"/></linearGradient></defs><rect x="0.5" y="0.5" width="8" height="8" rx="1" fill="url(#eg)" stroke="#9a9a9a"/><rect x="2" y="4" width="5" height="1" fill="#3a58a0"/><rect x="4" y="2" width="1" height="5" fill="#3a58a0"/></svg>
<svg style="position:absolute;left:79px;top:306px" width="17" height="13" viewBox="0 0 17 13" shape-rendering="crispEdges"><g shape-rendering="geometricPrecision"><path d="M0.5 3.5 L1.5 2.5 L3.5 2.5 L4.5 3.5 L4.5 11.5 L0.5 11.5 Z" fill="#f8f060" stroke="#000" stroke-width="1"/><path d="M1.2 5 L3.8 5 L3.8 9.5 L1.2 9.5 Z" fill="#80e080"/><path d="M4 8 L7 4.5 L8.5 6 L11 1.5" fill="none" stroke="#70e070" stroke-width="1.5"/><path d="M6.5 6.5 L8.5 4 L9.8 5.5 L12 1.5 L13 0.8 L15.5 3.3 L13 5 L12.5 6.5 Z" fill="#e80000"/><path d="M1 11.5 L4.8 6 L16 6 L12.3 11.5 Z" fill="#9a8a00" stroke="#000" stroke-width="1"/></g></svg>
<div style="position:absolute;left:98px;top:307px;font-family:'Liberation Sans', sans-serif;font-size:11px;line-height:1;font-weight:400;font-style:italic;color:#505050;white-space:pre;">getAllPurchaseOrders</div>
<div style="position:absolute;left:68px;top:328px;width:11px;height:1px;background:repeating-linear-gradient(to right,#a0a0a0 0 1px,transparent 1px 2px)"></div>
<svg style="position:absolute;left:64px;top:324px" width="9" height="9" viewBox="0 0 9 9" shape-rendering="crispEdges"><defs><linearGradient id="eg" x1="0" y1="0" x2="0" y2="1"><stop offset="0" stop-color="#fff"/><stop offset="1" stop-color="#dcdcdc"/></linearGradient></defs><rect x="0.5" y="0.5" width="8" height="8" rx="1" fill="url(#eg)" stroke="#9a9a9a"/><rect x="2" y="4" width="5" height="1" fill="#3a58a0"/><rect x="4" y="2" width="1" height="5" fill="#3a58a0"/></svg>
<svg style="position:absolute;left:79px;top:322px" width="17" height="13" viewBox="0 0 17 13" shape-rendering="crispEdges"><g shape-rendering="geometricPrecision"><path d="M0.5 3.5 L1.5 2.5 L3.5 2.5 L4.5 3.5 L4.5 11.5 L0.5 11.5 Z" fill="#f8f060" stroke="#000" stroke-width="1"/><path d="M1.2 5 L3.8 5 L3.8 9.5 L1.2 9.5 Z" fill="#80e080"/><path d="M4 8 L7 4.5 L8.5 6 L11 1.5" fill="none" stroke="#70e070" stroke-width="1.5"/><path d="M6.5 6.5 L8.5 4 L9.8 5.5 L12 1.5 L13 0.8 L15.5 3.3 L13 5 L12.5 6.5 Z" fill="#e80000"/><path d="M1 11.5 L4.8 6 L16 6 L12.3 11.5 Z" fill="#9a8a00" stroke="#000" stroke-width="1"/></g></svg>
<div style="position:absolute;left:98px;top:323px;font-family:'Liberation Sans', sans-serif;font-size:11px;line-height:1;font-weight:400;font-style:italic;color:#505050;white-space:pre;letter-spacing:-0.08px;">getPurchaseOrder</div>
<div style="position:absolute;left:68px;top:344px;width:11px;height:1px;background:repeating-linear-gradient(to right,#a0a0a0 0 1px,transparent 1px 2px)"></div>
<svg style="position:absolute;left:64px;top:340px" width="9" height="9" viewBox="0 0 9 9" shape-rendering="crispEdges"><defs><linearGradient id="eg" x1="0" y1="0" x2="0" y2="1"><stop offset="0" stop-color="#fff"/><stop offset="1" stop-color="#dcdcdc"/></linearGradient></defs><rect x="0.5" y="0.5" width="8" height="8" rx="1" fill="url(#eg)" stroke="#9a9a9a"/><rect x="2" y="4" width="5" height="1" fill="#3a58a0"/><rect x="4" y="2" width="1" height="5" fill="#3a58a0"/></svg>
<svg style="position:absolute;left:79px;top:338px" width="17" height="13" viewBox="0 0 17 13" shape-rendering="crispEdges"><g shape-rendering="geometricPrecision"><path d="M0.5 3.5 L1.5 2.5 L3.5 2.5 L4.5 3.5 L4.5 11.5 L0.5 11.5 Z" fill="#f8f060" stroke="#000" stroke-width="1"/><path d="M1.2 5 L3.8 5 L3.8 9.5 L1.2 9.5 Z" fill="#80e080"/><path d="M4 8 L7 4.5 L8.5 6 L11 1.5" fill="none" stroke="#70e070" stroke-width="1.5"/><path d="M6.5 6.5 L8.5 4 L9.8 5.5 L12 1.5 L13 0.8 L15.5 3.3 L13 5 L12.5 6.5 Z" fill="#e80000"/><path d="M1 11.5 L4.8 6 L16 6 L12.3 11.5 Z" fill="#9a8a00" stroke="#000" stroke-width="1"/></g></svg>
<div style="position:absolute;left:98px;top:339px;font-family:'Liberation Sans', sans-serif;font-size:11px;line-height:1;font-weight:400;font-style:italic;color:#505050;white-space:pre;letter-spacing:0.1px;">checkOut</div>
<div style="position:absolute;left:68px;top:360px;width:11px;height:1px;background:repeating-linear-gradient(to right,#a0a0a0 0 1px,transparent 1px 2px)"></div>
<svg style="position:absolute;left:64px;top:356px" width="9" height="9" viewBox="0 0 9 9" shape-rendering="crispEdges"><defs><linearGradient id="eg" x1="0" y1="0" x2="0" y2="1"><stop offset="0" stop-color="#fff"/><stop offset="1" stop-color="#dcdcdc"/></linearGradient></defs><rect x="0.5" y="0.5" width="8" height="8" rx="1" fill="url(#eg)" stroke="#9a9a9a"/><rect x="2" y="4" width="5" height="1" fill="#3a58a0"/><rect x="4" y="2" width="1" height="5" fill="#3a58a0"/></svg>
<svg style="position:absolute;left:79px;top:354px" width="17" height="13" viewBox="0 0 17 13" shape-rendering="crispEdges"><g shape-rendering="geometricPrecision"><path d="M0.5 3.5 L1.5 2.5 L3.5 2.5 L4.5 3.5 L4.5 11.5 L0.5 11.5 Z" fill="#f8f060" stroke="#000" stroke-width="1"/><path d="M1.2 5 L3.8 5 L3.8 9.5 L1.2 9.5 Z" fill="#80e080"/><path d="M4 8 L7 4.5 L8.5 6 L11 1.5" fill="none" stroke="#70e070" stroke-width="1.5"/><path d="M6.5 6.5 L8.5 4 L9.8 5.5 L12 1.5 L13 0.8 L15.5 3.3 L13 5 L12.5 6.5 Z" fill="#e80000"/><path d="M1 11.5 L4.8 6 L16 6 L12.3 11.5 Z" fill="#9a8a00" stroke="#000" stroke-width="1"/></g></svg>
<div style="position:absolute;left:98px;top:355px;font-family:'Liberation Sans', sans-serif;font-size:11px;line-height:1;font-weight:400;font-style:italic;color:#505050;white-space:pre;">getPurchaseOrdersByDate</div>
<div style="position:absolute;left:68px;top:376px;width:11px;height:1px;background:repeating-linear-gradient(to right,#a0a0a0 0 1px,transparent 1px 2px)"></div>
<svg style="position:absolute;left:64px;top:372px" width="9" height="9" viewBox="0 0 9 9" shape-rendering="crispEdges"><defs><linearGradient id="eg" x1="0" y1="0" x2="0" y2="1"><stop offset="0" stop-color="#fff"/><stop offset="1" stop-color="#dcdcdc"/></linearGradient></defs><rect x="0.5" y="0.5" width="8" height="8" rx="1" fill="url(#eg)" stroke="#9a9a9a"/><rect x="2" y="4" width="5" height="1" fill="#3a58a0"/><rect x="4" y="2" width="1" height="5" fill="#3a58a0"/></svg>
<svg style="position:absolute;left:79px;top:370px" width="17" height="13" viewBox="0 0 17 13" shape-rendering="crispEdges"><g shape-rendering="geometricPrecision"><path d="M0.5 3.5 L1.5 2.5 L3.5 2.5 L4.5 3.5 L4.5 11.5 L0.5 11.5 Z" fill="#f8f060" stroke="#000" stroke-width="1"/><path d="M1.2 5 L3.8 5 L3.8 9.5 L1.2 9.5 Z" fill="#80e080"/><path d="M4 8 L7 4.5 L8.5 6 L11 1.5" fill="none" stroke="#70e070" stroke-width="1.5"/><path d="M6.5 6.5 L8.5 4 L9.8 5.5 L12 1.5 L13 0.8 L15.5 3.3 L13 5 L12.5 6.5 Z" fill="#e80000"/><path d="M1 11.5 L4.8 6 L16 6 L12.3 11.5 Z" fill="#9a8a00" stroke="#000" stroke-width="1"/></g></svg>
<div style="position:absolute;left:98px;top:371px;font-family:'Liberation Sans', sans-serif;font-size:11px;line-height:1;font-weight:400;font-style:italic;color:#505050;white-space:pre;letter-spacing:-0.15px;">closePurchaseOrder</div>
<div style="position:absolute;left:68px;top:392px;width:11px;height:1px;background:repeating-linear-gradient(to right,#a0a0a0 0 1px,transparent 1px 2px)"></div>
<svg style="position:absolute;left:80px;top:385px" width="13" height="15" viewBox="0 0 13 15" shape-rendering="crispEdges"><g shape-rendering="geometricPrecision"><path d="M2.5 0.8 L4.2 2 L4.2 3.6 L2.5 4.6 L0.8 3.6 L0.8 2 Z" fill="#000"/><rect x="0" y="2.3" width="7" height="1.1" fill="#000"/><rect x="6.5" y="0.5" width="6" height="4.5" rx="1" fill="#dcdcdc" stroke="#000" stroke-width="1"/><rect x="9" y="5" width="1.5" height="3" fill="#000"/><rect x="6.5" y="7.5" width="6" height="4.5" rx="1" fill="#dcdcdc" stroke="#000" stroke-width="1"/><rect x="8.5" y="12" width="3" height="3" fill="#000"/><circle cx="2.7" cy="9.5" r="2.5" fill="#f00000"/></g></svg>
<div style="position:absolute;left:98px;top:387px;font-family:'Liberation Sans', sans-serif;font-size:11px;line-height:1;font-weight:400;font-style:italic;color:#00b000;white-space:pre;letter-spacing:-0.16px;">Stop PurchaseOrderExample</div>
<div style="position:absolute;left:30px;top:408px;width:11px;height:1px;background:repeating-linear-gradient(to right,#a0a0a0 0 1px,transparent 1px 2px)"></div>
<svg style="position:absolute;left:26px;top:404px" width="9" height="9" viewBox="0 0 9 9" shape-rendering="crispEdges"><defs><linearGradient id="eg" x1="0" y1="0" x2="0" y2="1"><stop offset="0" stop-color="#fff"/><stop offset="1" stop-color="#dcdcdc"/></linearGradient></defs><rect x="0.5" y="0.5" width="8" height="8" rx="1" fill="url(#eg)" stroke="#9a9a9a"/><rect x="2" y="4" width="5" height="1" fill="#3a58a0"/><rect x="4" y="2" width="1" height="5" fill="#3a58a0"/></svg>
<svg style="position:absolute;left:41px;top:402px" width="17" height="13" viewBox="0 0 17 13" shape-rendering="crispEdges"><g shape-rendering="geometricPrecision"><path d="M0.5 3.5 L1.5 2.5 L3.5 2.5 L4.5 3.5 L4.5 11.5 L0.5 11.5 Z" fill="#f8f060" stroke="#000" stroke-width="1"/><path d="M1.2 5 L3.8 5 L3.8 9.5 L1.2 9.5 Z" fill="#80e080"/><path d="M4 8 L7 4.5 L8.5 6 L11 1.5" fill="none" stroke="#70e070" stroke-width="1.5"/><path d="M6.5 6.5 L8.5 4 L9.8 5.5 L12 1.5 L13 0.8 L15.5 3.3 L13 5 L12.5 6.5 Z" fill="#e80000"/><path d="M1 11.5 L4.8 6 L16 6 L12.3 11.5 Z" fill="#9a8a00" stroke="#000" stroke-width="1"/></g></svg>
<div style="position:absolute;left:60px;top:403px;font-family:'Liberation Sans', sans-serif;font-size:11px;line-height:1;font-weight:400;font-style:normal;color:#000;white-space:pre;">Dev Tests</div>
<div style="position:absolute;left:11px;top:424px;width:11px;height:1px;background:repeating-linear-gradient(to right,#a0a0a0 0 1px,transparent 1px 2px)"></div>
<svg style="position:absolute;left:7px;top:420px" width="9" height="9" viewBox="0 0 9 9" shape-rendering="crispEdges"><defs><linearGradient id="eg" x1="0" y1="0" x2="0" y2="1"><stop offset="0" stop-color="#fff"/><stop offset="1" stop-color="#dcdcdc"/></linearGradient></defs><rect x="0.5" y="0.5" width="8" height="8" rx="1" fill="url(#eg)" stroke="#9a9a9a"/><rect x="2" y="4" width="5" height="1" fill="#3a58a0"/></svg>
<svg style="position:absolute;left:22px;top:418px" width="17" height="13" viewBox="0 0 17 13" shape-rendering="crispEdges"><g shape-rendering="geometricPrecision"><path d="M0.5 3.5 L1.5 2.5 L3.5 2.5 L4.5 3.5 L4.5 11.5 L0.5 11.5 Z" fill="#f8f060" stroke="#000" stroke-width="1"/><path d="M1.2 5 L3.8 5 L3.8 9.5 L1.2 9.5 Z" fill="#80e080"/><path d="M4 8 L7 4.5 L8.5 6 L11 1.5" fill="none" stroke="#70e070" stroke-width="1.5"/><path d="M6.5 6.5 L8.5 4 L9.8 5.5 L12 1.5 L13 0.8 L15.5 3.3 L13 5 L12.5 6.5 Z" fill="#e80000"/><path d="M1 11.5 L4.8 6 L16 6 L12.3 11.5 Z" fill="#9a8a00" stroke="#000" stroke-width="1"/></g></svg>
<div style="position:absolute;left:41px;top:419px;font-family:'Liberation Sans', sans-serif;font-size:11px;line-height:1;font-weight:400;font-style:normal;color:#000;white-space:pre;">Libraries</div>
<div style="position:absolute;left:30px;top:440px;width:11px;height:1px;background:repeating-linear-gradient(to right,#a0a0a0 0 1px,transparent 1px 2px)"></div>
<svg style="position:absolute;left:26px;top:436px" width="9" height="9" viewBox="0 0 9 9" shape-rendering="crispEdges"><defs><linearGradient id="eg" x1="0" y1="0" x2="0" y2="1"><stop offset="0" stop-color="#fff"/><stop offset="1" stop-color="#dcdcdc"/></linearGradient></defs><rect x="0.5" y="0.5" width="8" height="8" rx="1" fill="url(#eg)" stroke="#9a9a9a"/><rect x="2" y="4" width="5" height="1" fill="#3a58a0"/><rect x="4" y="2" width="1" height="5" fill="#3a58a0"/></svg>
<svg style="position:absolute;left:41px;top:434px" width="17" height="13" viewBox="0 0 17 13" shape-rendering="crispEdges"><g shape-rendering="geometricPrecision"><path d="M0.5 3.5 L1.5 2.5 L3.5 2.5 L4.5 3.5 L4.5 11.5 L0.5 11.5 Z" fill="#f8f060" stroke="#000" stroke-width="1"/><path d="M1.2 5 L3.8 5 L3.8 9.5 L1.2 9.5 Z" fill="#80e080"/><path d="M4 8 L7 4.5 L8.5 6 L11 1.5" fill="none" stroke="#70e070" stroke-width="1.5"/><path d="M6.5 6.5 L8.5 4 L9.8 5.5 L12 1.5 L13 0.8 L15.5 3.3 L13 5 L12.5 6.5 Z" fill="#e80000"/><path d="M1 11.5 L4.8 6 L16 6 L12.3 11.5 Z" fill="#9a8a00" stroke="#000" stroke-width="1"/></g></svg>
<div style="position:absolute;left:60px;top:435px;font-family:'Liberation Sans', sans-serif;font-size:11px;line-height:1;font-weight:400;font-style:italic;color:#0a0ac8;white-space:pre;letter-spacing:-0.2px;">PurchaseOrderExample</div>
</div>
<div style="position:absolute;left:307px;top:82px;width:600px;height:1px;background:#696969"></div>
<div style="position:absolute;left:307px;top:83px;width:600px;height:1px;background:#f9f9f9"></div>
<div style="position:absolute;left:307px;top:82px;width:1px;height:232px;background:#696969"></div>
<div style="position:absolute;left:308px;top:83px;width:1px;height:231px;background:#f9f9f9"></div>
<div style="position:absolute;left:307px;top:314px;width:600px;height:1px;background:#ffffff"></div>
<div style="position:absolute;left:906px;top:83px;width:1px;height:231px;background:#ffffff"></div>
<div style="position:absolute;left:840px;top:89px;width:63px;height:21px;background:#cccccc;border:1px solid #adadad;box-sizing:border-box"></div>
<div style="position:absolute;left:855px;top:94px;font-family:'Liberation Sans', sans-serif;font-size:11px;line-height:1;font-weight:400;font-style:normal;color:#838383;white-space:pre;letter-spacing:-0.25px;">Cancel</div>
<div style="position:absolute;left:311px;top:118px;font-family:'Liberation Sans', sans-serif;font-size:11px;line-height:1;font-weight:400;font-style:normal;color:#000;white-space:pre;">Test progress ...</div>
<div style="position:absolute;left:311px;top:135px;width:593px;height:16px;background:#e6e6e6;border:1px solid #bcbcbc;border-left:none;box-sizing:border-box"></div>
<div style="position:absolute;left:311px;top:136px;width:2px;height:14px;background:#00ee00"></div>
<div style="position:absolute;left:311px;top:162px;font-family:'Liberation Sans', sans-serif;font-size:11px;line-height:1;font-weight:400;font-style:normal;color:#000;white-space:pre;">Runs:</div>
<div style="position:absolute;left:347px;top:162px;font-family:'Liberation Sans', sans-serif;font-size:11px;line-height:1;font-weight:400;font-style:normal;color:#000;white-space:pre;">0/1</div>
<div style="position:absolute;left:518px;top:162px;font-family:'Liberation Sans', sans-serif;font-size:11px;line-height:1;font-weight:400;font-style:normal;color:#000;white-space:pre;">Errors:</div>
<div style="position:absolute;left:560px;top:162px;font-family:'Liberation Sans', sans-serif;font-size:11px;line-height:1;font-weight:400;font-style:normal;color:#000;white-space:pre;">0</div>
<div style="position:absolute;left:699px;top:162px;font-family:'Liberation Sans', sans-serif;font-size:11px;line-height:1;font-weight:400;font-style:normal;color:#000;white-space:pre;">Elapsed time:</div>
<div style="position:absolute;left:771px;top:162px;font-family:'Liberation Sans', sans-serif;font-size:11px;line-height:1;font-weight:400;font-style:normal;color:#000;white-space:pre;">0s</div>
<div style="position:absolute;left:311px;top:182px;width:593px;height:1px;background:#a0a0a0"></div>
<div style="position:absolute;left:311px;top:183px;width:593px;height:1px;background:#ffffff"></div>
<div style="position:absolute;left:323px;top:194px;font-family:'Liberation Sans', sans-serif;font-size:11px;line-height:1;font-weight:400;font-style:normal;color:#000;white-space:pre;">Hierarchy</div>
<div style="position:absolute;left:376px;top:190px;width:40px;height:19px;background:#e3e3e3;border:1px solid #adadad;border-bottom:none;box-sizing:border-box"></div>
<div style="position:absolute;left:381px;top:194px;font-family:'Liberation Sans', sans-serif;font-size:11px;line-height:1;font-weight:400;font-style:normal;color:#000;white-space:pre;">Errors</div>
<div style="position:absolute;left:311px;top:208px;width:593px;height:101px;border:1px solid #a0a0a0;box-sizing:border-box"></div>
<div style="position:absolute;left:313px;top:210px;width:589px;height:97px;border:1px solid #828790;box-sizing:border-box;background:#fff"></div>
<svg style="position:absolute;left:315px;top:211px" width="15" height="13" viewBox="0 0 15 13" shape-rendering="crispEdges"><rect x="3" y="3" width="8" height="8" fill="#1a1a1a"/><rect x="4" y="4" width="6" height="6" fill="#b4b4b4"/><rect x="2" y="5" width="1" height="3" fill="#1a1a1a"/><rect x="11" y="5" width="1" height="3" fill="#1a1a1a"/><rect x="5" y="2" width="3" height="1" fill="#1a1a1a"/><rect x="5" y="11" width="3" height="1" fill="#1a1a1a"/><rect x="3" y="3" width="1" height="1" fill="#fff"/><rect x="10" y="3" width="1" height="1" fill="#fff"/><rect x="3" y="10" width="1" height="1" fill="#fff"/><rect x="10" y="10" width="1" height="1" fill="#fff"/><rect x="4" y="5" width="1" height="2" fill="#f0f0f0"/><rect x="5" y="4" width="2" height="1" fill="#f0f0f0"/><rect x="8" y="9" width="2" height="1" fill="#909090"/><rect x="9" y="8" width="1" height="1" fill="#909090"/><rect x="6" y="6" width="2" height="2" fill="#000"/><g shape-rendering="geometricPrecision"><path d="M0 3.2 L3.6 0 L3.6 6 Z" fill="#e80000"/><path d="M14.5 3.2 L11 0 L11 6 Z" fill="#00d000"/></g></svg>
<div style="position:absolute;left:334px;top:214px;font-family:'Liberation Sans', sans-serif;font-size:11px;line-height:1;font-weight:400;font-style:italic;color:#f00000;white-space:pre;letter-spacing:0.2px;">Add Item 2</div>
<div style="position:absolute;left:307px;top:318px;width:601px;height:1px;background:#696969"></div>
<div style="position:absolute;left:307px;top:319px;width:601px;height:1px;background:#f9f9f9"></div>
<div style="position:absolute;left:307px;top:318px;width:1px;height:284px;background:#696969"></div>
<div style="position:absolute;left:308px;top:319px;width:1px;height:283px;background:#f9f9f9"></div>
<div style="position:absolute;left:307px;top:601px;width:600px;height:1px;background:#ffffff"></div>
<svg style="position:absolute;left:311px;top:322px" width="15" height="15" viewBox="0 0 15 15" shape-rendering="crispEdges"><g shape-rendering="geometricPrecision"><defs><radialGradient id="ngtop" cx="0.5" cy="0.35" r="0.6"><stop offset="0" stop-color="#e8f6e0"/><stop offset="1" stop-color="#6cbf5c"/></radialGradient></defs><circle cx="7.5" cy="7.5" r="6.8" fill="url(#ngtop)" stroke="#2d8a2d" stroke-width="1.2"/><rect x="4" y="3.5" width="7" height="1.2" fill="#1b3b6b"/><path d="M7.5 5 L4.5 8 L10.5 8 Z" fill="#1b3b6b"/><rect x="7" y="7" width="1.2" height="5" fill="#1b3b6b"/></g></svg>
<svg style="position:absolute;left:332px;top:322px" width="15" height="15" viewBox="0 0 15 15" shape-rendering="crispEdges"><g shape-rendering="geometricPrecision"><defs><radialGradient id="ngup" cx="0.5" cy="0.35" r="0.6"><stop offset="0" stop-color="#e8f6e0"/><stop offset="1" stop-color="#6cbf5c"/></radialGradient></defs><circle cx="7.5" cy="7.5" r="6.8" fill="url(#ngup)" stroke="#2d8a2d" stroke-width="1.2"/><path d="M7.5 3.5 L4.5 7 L10.5 7 Z" fill="#1b3b6b"/><rect x="7" y="6" width="1.2" height="5.5" fill="#1b3b6b"/></g></svg>
<svg style="position:absolute;left:353px;top:322px" width="15" height="15" viewBox="0 0 15 15" shape-rendering="crispEdges"><g shape-rendering="geometricPrecision"><defs><radialGradient id="ngdown" cx="0.5" cy="0.35" r="0.6"><stop offset="0" stop-color="#e8f6e0"/><stop offset="1" stop-color="#6cbf5c"/></radialGradient></defs><circle cx="7.5" cy="7.5" r="6.8" fill="url(#ngdown)" stroke="#2d8a2d" stroke-width="1.2"/><path d="M7.5 11.5 L4.5 8 L10.5 8 Z" fill="#1b3b6b"/><rect x="7" y="3.5" width="1.2" height="5.5" fill="#1b3b6b"/></g></svg>
<svg style="position:absolute;left:374px;top:322px" width="15" height="15" viewBox="0 0 15 15" shape-rendering="crispEdges"><g shape-rendering="geometricPrecision"><defs><radialGradient id="ngbottom" cx="0.5" cy="0.35" r="0.6"><stop offset="0" stop-color="#e8f6e0"/><stop offset="1" stop-color="#6cbf5c"/></radialGradient></defs><circle cx="7.5" cy="7.5" r="6.8" fill="url(#ngbottom)" stroke="#2d8a2d" stroke-width="1.2"/><rect x="4" y="10.5" width="7" height="1.2" fill="#1b3b6b"/><path d="M7.5 10 L4.5 7 L10.5 7 Z" fill="#1b3b6b"/><rect x="7" y="3" width="1.2" height="5" fill="#1b3b6b"/></g></svg>
<div style="position:absolute;left:320px;top:346px;font-family:'Liberation Sans', sans-serif;font-size:11.5px;line-height:1;font-weight:700;font-style:normal;color:#000;white-space:pre;letter-spacing:0.3px;">Reference data</div>
<div style="position:absolute;left:454px;top:345px;width:13px;height:13px;background:#fff;border:1px solid #333;box-sizing:border-box"></div>
<svg style="position:absolute;left:455px;top:347px" width="11" height="9" viewBox="0 0 11 9" shape-rendering="crispEdges"><g shape-rendering="geometricPrecision"><path d="M1.5 4.5 L4 7 L9.5 1" fill="none" stroke="#000" stroke-width="1.3"/></g></svg>
<div style="position:absolute;left:470px;top:346px;font-family:'Liberation Sans', sans-serif;font-size:11px;line-height:1;font-weight:400;font-style:normal;color:#000;white-space:pre;">Hide ignored differences</div>
<div style="position:absolute;left:624px;top:341px;width:107px;height:21px;background:#e1e1e1;border:1px solid #adadad;box-sizing:border-box"></div>
<div style="position:absolute;left:639px;top:346px;font-family:'Liberation Sans', sans-serif;font-size:11px;line-height:1;font-weight:400;font-style:normal;color:#000;white-space:pre;letter-spacing:-0.13px;">Accept changes</div>
<div style="position:absolute;left:801px;top:346px;font-family:'Liberation Sans', sans-serif;font-size:11.5px;line-height:1;font-weight:700;font-style:normal;color:#000;white-space:pre;letter-spacing:0.3px;">Test output data</div>
<div style="position:absolute;left:308px;top:412px;width:9px;height:3px;background:#ffc8c8;border-right:1px solid #c89a9a;border-bottom:1px solid #c89a9a;box-sizing:border-box"></div>
<div style="position:absolute;left:308px;top:459px;width:9px;height:3px;background:#ffc8c8;border-right:1px solid #c89a9a;border-bottom:1px solid #c89a9a;box-sizing:border-box"></div>
<div style="position:absolute;left:308px;top:472px;width:9px;height:6px;background:#ffc8c8;border-right:1px solid #c89a9a;border-bottom:1px solid #c89a9a;box-sizing:border-box"></div>
<div style="position:absolute;left:308px;top:485px;width:9px;height:50px;background:#c8ffc8;border-right:1px solid #8ac08a;border-bottom:1px solid #8ac08a;box-sizing:border-box"></div>
<div style="position:absolute;left:897px;top:412px;width:9px;height:3px;background:#ffc8c8;border-right:1px solid #c89a9a;border-bottom:1px solid #c89a9a;box-sizing:border-box"></div>
<div style="position:absolute;left:897px;top:459px;width:9px;height:3px;background:#ffc8c8;border-right:1px solid #c89a9a;border-bottom:1px solid #c89a9a;box-sizing:border-box"></div>
<div style="position:absolute;left:897px;top:472px;width:9px;height:57px;background:#ffc8c8;border-right:1px solid #c89a9a;border-bottom:1px solid #c89a9a;box-sizing:border-box"></div>
<div style="position:absolute;left:897px;top:535px;width:9px;height:3px;background:#c8c8c8;border-right:1px solid #909090;border-bottom:1px solid #909090;box-sizing:border-box"></div>
<div style="position:absolute;left:319px;top:365px;width:274px;height:214px;border:1px solid #a0a0a0;box-sizing:border-box;background:#f0f0f0"></div>
<div style="position:absolute;left:337px;top:366px;width:235px;height:195px;overflow:hidden;background:#fff">
<div style="position:absolute;left:0px;top:68px;width:235px;height:17px;background:#ffe0e0"></div>
<div style="position:absolute;left:0px;top:136px;width:235px;height:17px;background:#ffe0e0"></div>
<div style="position:absolute;left:0px;top:153px;width:235px;height:17px;background:#ffe0e0"></div>
<div style="position:absolute;left:0px;top:68px;width:235px;height:1px;background:#999999"></div>
<div style="position:absolute;left:0px;top:85px;width:235px;height:1px;background:#999999"></div>
<div style="position:absolute;left:0px;top:136px;width:235px;height:1px;background:#999999"></div>
<div style="position:absolute;left:0px;top:170px;width:235px;height:1px;background:#999999"></div>
<div style="position:absolute;left:0px;top:5px;font-family:'Liberation Mono', monospace;font-size:11.67px;line-height:1;font-weight:400;font-style:normal;color:#000;white-space:pre;">response.log:</div>
<div style="position:absolute;left:0px;top:22px;font-family:'Liberation Mono', monospace;font-size:11.67px;line-height:1;font-weight:400;font-style:normal;color:#000;white-space:pre;">&lt;?xml version="1.0" encoding="UTF-</div>
<div style="position:absolute;left:0px;top:39px;font-family:'Liberation Mono', monospace;font-size:11.67px;line-height:1;font-weight:400;font-style:normal;color:#000;white-space:pre;">&lt;SOAP-ENV:Envelope xmlns:SOAP-ENV=</div>
<div style="position:absolute;left:0px;top:56px;font-family:'Liberation Mono', monospace;font-size:11.67px;line-height:1;font-weight:400;font-style:normal;color:#000;white-space:pre;">                   xmlns:xsd="http</div>
<div style="position:absolute;left:0px;top:73px;font-family:'Liberation Mono', monospace;font-size:11.67px;line-height:1;font-weight:400;font-style:normal;color:#000;white-space:pre;">                   xmlns:ns0="urn:</div>
<div style="position:absolute;left:0px;top:90px;font-family:'Liberation Mono', monospace;font-size:11.67px;line-height:1;font-weight:400;font-style:normal;color:#000;white-space:pre;">                   xmlns:SOAP-ENC=</div>
<div style="position:absolute;left:0px;top:107px;font-family:'Liberation Mono', monospace;font-size:11.67px;line-height:1;font-weight:400;font-style:normal;color:#000;white-space:pre;">                   xmlns:xsi="http</div>
<div style="position:absolute;left:0px;top:124px;font-family:'Liberation Mono', monospace;font-size:11.67px;line-height:1;font-weight:400;font-style:normal;color:#000;white-space:pre;">      &lt;SOAP-ENV:Body SOAP-ENV:enco</div>
<div style="position:absolute;left:0px;top:141px;font-family:'Liberation Mono', monospace;font-size:11.67px;line-height:1;font-weight:400;font-style:normal;color:#000;white-space:pre;">            &lt;ns0:addNewItemRespons</div>
<div style="position:absolute;left:0px;top:158px;font-family:'Liberation Mono', monospace;font-size:11.67px;line-height:1;font-weight:400;font-style:normal;color:#000;white-space:pre;">        &lt;/ns0:addNewItemResponse&gt;</div>
<div style="position:absolute;left:0px;top:175px;font-family:'Liberation Mono', monospace;font-size:11.67px;line-height:1;font-weight:400;font-style:normal;color:#000;white-space:pre;">      &lt;/SOAP-ENV:Body&gt;</div>
<div style="position:absolute;left:0px;top:192px;font-family:'Liberation Mono', monospace;font-size:11.67px;line-height:1;font-weight:400;font-style:normal;color:#000;white-space:pre;">&lt;/SOAP-ENV:Envelope&gt;</div>
</div>
<div style="position:absolute;left:572px;top:366px;width:20px;height:212px;overflow:hidden;background:#f0f0f0">
<div style="position:absolute;left:0px;top:68px;width:20px;height:1px;background:#999999"></div>
<div style="position:absolute;left:0px;top:85px;width:20px;height:1px;background:#999999"></div>
<div style="position:absolute;left:0px;top:136px;width:20px;height:1px;background:#999999"></div>
<div style="position:absolute;left:0px;top:170px;width:20px;height:1px;background:#999999"></div>
<div style="position:absolute;left:0;top:0;width:20px;height:195px;overflow:hidden">
<div style="position:absolute;left:3px;top:5px;font-family:'Liberation Mono', monospace;font-size:11.67px;line-height:1;font-weight:400;font-style:normal;color:#8b0000;white-space:pre;">27</div>
</div>
<div style="position:absolute;left:0;top:0;width:20px;height:195px;overflow:hidden">
<div style="position:absolute;left:3px;top:22px;font-family:'Liberation Mono', monospace;font-size:11.67px;line-height:1;font-weight:400;font-style:normal;color:#8b0000;white-space:pre;">28</div>
</div>
<div style="position:absolute;left:0;top:0;width:20px;height:195px;overflow:hidden">
<div style="position:absolute;left:3px;top:39px;font-family:'Liberation Mono', monospace;font-size:11.67px;line-height:1;font-weight:400;font-style:normal;color:#8b0000;white-space:pre;">29</div>
</div>
<div style="position:absolute;left:0;top:0;width:20px;height:195px;overflow:hidden">
<div style="position:absolute;left:3px;top:56px;font-family:'Liberation Mono', monospace;font-size:11.67px;line-height:1;font-weight:400;font-style:normal;color:#8b0000;white-space:pre;">30</div>
</div>
<div style="position:absolute;left:0;top:0;width:20px;height:195px;overflow:hidden">
<div style="position:absolute;left:3px;top:73px;font-family:'Liberation Mono', monospace;font-size:11.67px;line-height:1;font-weight:400;font-style:normal;color:#8b0000;white-space:pre;">31</div>
</div>
<div style="position:absolute;left:0;top:0;width:20px;height:195px;overflow:hidden">
<div style="position:absolute;left:3px;top:90px;font-family:'Liberation Mono', monospace;font-size:11.67px;line-height:1;font-weight:400;font-style:normal;color:#8b0000;white-space:pre;">32</div>
</div>
<div style="position:absolute;left:0;top:0;width:20px;height:195px;overflow:hidden">
<div style="position:absolute;left:3px;top:107px;font-family:'Liberation Mono', monospace;font-size:11.67px;line-height:1;font-weight:400;font-style:normal;color:#8b0000;white-space:pre;">33</div>
</div>
<div style="position:absolute;left:0;top:0;width:20px;height:195px;overflow:hidden">
<div style="position:absolute;left:3px;top:124px;font-family:'Liberation Mono', monospace;font-size:11.67px;line-height:1;font-weight:400;font-style:normal;color:#8b0000;white-space:pre;">34</div>
</div>
<div style="position:absolute;left:0;top:0;width:20px;height:195px;overflow:hidden">
<div style="position:absolute;left:3px;top:141px;font-family:'Liberation Mono', monospace;font-size:11.67px;line-height:1;font-weight:400;font-style:normal;color:#8b0000;white-space:pre;">35</div>
</div>
<div style="position:absolute;left:0;top:0;width:20px;height:195px;overflow:hidden">
<div style="position:absolute;left:3px;top:158px;font-family:'Liberation Mono', monospace;font-size:11.67px;line-height:1;font-weight:400;font-style:normal;color:#8b0000;white-space:pre;">36</div>
</div>
<div style="position:absolute;left:0;top:0;width:20px;height:195px;overflow:hidden">
<div style="position:absolute;left:3px;top:175px;font-family:'Liberation Mono', monospace;font-size:11.67px;line-height:1;font-weight:400;font-style:normal;color:#8b0000;white-space:pre;">37</div>
</div>
<div style="position:absolute;left:0;top:0;width:20px;height:195px;overflow:hidden">
<div style="position:absolute;left:3px;top:192px;font-family:'Liberation Mono', monospace;font-size:11.67px;line-height:1;font-weight:400;font-style:normal;color:#8b0000;white-space:pre;">38</div>
</div>
</div>
<svg style="position:absolute;left:325px;top:372px" width="8" height="7" viewBox="0 0 8 7" shape-rendering="crispEdges"><g shape-rendering="geometricPrecision"><path d="M0.8 5.8 L4 2 L7.2 5.8" fill="none" stroke="#606060" stroke-width="1.8"/></g></svg>
<div style="position:absolute;left:321px;top:457px;width:15px;height:33px;background:#cdcdcd"></div>
<svg style="position:absolute;left:324px;top:549px" width="9" height="7" viewBox="0 0 9 7" shape-rendering="crispEdges"><g shape-rendering="geometricPrecision"><path d="M1 1 L4.5 5 L8 1" fill="none" stroke="#606060" stroke-width="2"/></g></svg>
<svg style="position:absolute;left:341px;top:565px" width="7" height="9" viewBox="0 0 7 9" shape-rendering="crispEdges"><g shape-rendering="geometricPrecision"><path d="M6 1 L2 4.5 L6 8" fill="none" stroke="#606060" stroke-width="2"/></g></svg>
<div style="position:absolute;left:354px;top:562px;width:64px;height:15px;background:#cdcdcd"></div>
<svg style="position:absolute;left:562px;top:565px" width="7" height="9" viewBox="0 0 7 9" shape-rendering="crispEdges"><g shape-rendering="geometricPrecision"><path d="M1 1 L5 4.5 L1 8" fill="none" stroke="#606060" stroke-width="2"/></g></svg>
<svg style="position:absolute;left:593px;top:366px" width="30" height="212" viewBox="0 0 30 212" shape-rendering="crispEdges"><g shape-rendering="geometricPrecision"><rect x="0" y="68" width="30" height="17" fill="#ffc8c8"/><rect x="0" y="68" width="30" height="1" fill="#999999"/><rect x="0" y="85" width="30" height="1" fill="#999999"/><path d="M0 136 L0 170 L5.5 212 L30 212 L30 136 Z" fill="#ffc8c8"/><rect x="0" y="136" width="30" height="1" fill="#999999"/><path d="M0 170 L5.5 212" stroke="#999999" stroke-width="1"/></g></svg>
<div style="position:absolute;left:623px;top:365px;width:273px;height:214px;border:1px solid #a0a0a0;box-sizing:border-box;background:#f0f0f0"></div>
<div style="position:absolute;left:644px;top:366px;width:235px;height:195px;overflow:hidden;background:#fff">
<div style="position:absolute;left:0px;top:68px;width:235px;height:17px;background:#ffe0e0"></div>
<div style="position:absolute;left:0px;top:136px;width:235px;height:17px;background:#ffe0e0"></div>
<div style="position:absolute;left:0px;top:153px;width:235px;height:17px;background:#ffe0e0"></div>
<div style="position:absolute;left:0px;top:170px;width:235px;height:17px;background:#ffe0e0"></div>
<div style="position:absolute;left:0px;top:187px;width:235px;height:17px;background:#ffe0e0"></div>
<div style="position:absolute;left:0px;top:68px;width:235px;height:1px;background:#999999"></div>
<div style="position:absolute;left:0px;top:85px;width:235px;height:1px;background:#999999"></div>
<div style="position:absolute;left:0px;top:136px;width:235px;height:1px;background:#999999"></div>
<div style="position:absolute;left:0px;top:5px;font-family:'Liberation Mono', monospace;font-size:11.67px;line-height:1;font-weight:400;font-style:normal;color:#000;white-space:pre;">response.log:</div>
<div style="position:absolute;left:0px;top:22px;font-family:'Liberation Mono', monospace;font-size:11.67px;line-height:1;font-weight:400;font-style:normal;color:#000;white-space:pre;">&lt;?xml version="1.0" encoding="UTF-</div>
<div style="position:absolute;left:0px;top:39px;font-family:'Liberation Mono', monospace;font-size:11.67px;line-height:1;font-weight:400;font-style:normal;color:#000;white-space:pre;">&lt;SOAP-ENV:Envelope xmlns:SOAP-ENV=</div>
<div style="position:absolute;left:0px;top:56px;font-family:'Liberation Mono', monospace;font-size:11.67px;line-height:1;font-weight:400;font-style:normal;color:#000;white-space:pre;">                   xmlns:xsd="http</div>
<div style="position:absolute;left:0px;top:73px;font-family:'Liberation Mono', monospace;font-size:11.67px;line-height:1;font-weight:400;font-style:normal;color:#000;white-space:pre;">                   xmlns:bridge="h</div>
<div style="position:absolute;left:0px;top:90px;font-family:'Liberation Mono', monospace;font-size:11.67px;line-height:1;font-weight:400;font-style:normal;color:#000;white-space:pre;">                   xmlns:SOAP-ENC=</div>
<div style="position:absolute;left:0px;top:107px;font-family:'Liberation Mono', monospace;font-size:11.67px;line-height:1;font-weight:400;font-style:normal;color:#000;white-space:pre;">                   xmlns:xsi="http</div>
<div style="position:absolute;left:0px;top:124px;font-family:'Liberation Mono', monospace;font-size:11.67px;line-height:1;font-weight:400;font-style:normal;color:#000;white-space:pre;">      &lt;SOAP-ENV:Body SOAP-ENV:enco</div>
<div style="position:absolute;left:0px;top:141px;font-family:'Liberation Mono', monospace;font-size:11.67px;line-height:1;font-weight:400;font-style:normal;color:#000;white-space:pre;">            &lt;SOAP-ENV:Fault&gt;</div>
<div style="position:absolute;left:0px;top:158px;font-family:'Liberation Mono', monospace;font-size:11.67px;line-height:1;font-weight:400;font-style:normal;color:#000;white-space:pre;">                  &lt;faultcode&gt;bridg</div>
<div style="position:absolute;left:0px;top:175px;font-family:'Liberation Mono', monospace;font-size:11.67px;line-height:1;font-weight:400;font-style:normal;color:#000;white-space:pre;">                  &lt;faultstring&gt;Rec</div>
<div style="position:absolute;left:0px;top:192px;font-family:'Liberation Mono', monospace;font-size:11.67px;line-height:1;font-weight:400;font-style:normal;color:#000;white-space:pre;">                  &lt;detail&gt;</div>
</div>
<div style="position:absolute;left:624px;top:366px;width:20px;height:195px;overflow:hidden;background:#f0f0f0">
<div style="position:absolute;left:0px;top:68px;width:20px;height:1px;background:#999999"></div>
<div style="position:absolute;left:0px;top:85px;width:20px;height:1px;background:#999999"></div>
<div style="position:absolute;left:0px;top:136px;width:20px;height:1px;background:#999999"></div>
<div style="position:absolute;left:3px;top:5px;font-family:'Liberation Mono', monospace;font-size:11.67px;line-height:1;font-weight:400;font-style:normal;color:#8b0000;white-space:pre;">27</div>
<div style="position:absolute;left:3px;top:22px;font-family:'Liberation Mono', monospace;font-size:11.67px;line-height:1;font-weight:400;font-style:normal;color:#8b0000;white-space:pre;">28</div>
<div style="position:absolute;left:3px;top:39px;font-family:'Liberation Mono', monospace;font-size:11.67px;line-height:1;font-weight:400;font-style:normal;color:#8b0000;white-space:pre;">29</div>
<div style="position:absolute;left:3px;top:56px;font-family:'Liberation Mono', monospace;font-size:11.67px;line-height:1;font-weight:400;font-style:normal;color:#8b0000;white-space:pre;">30</div>
<div style="position:absolute;left:3px;top:73px;font-family:'Liberation Mono', monospace;font-size:11.67px;line-height:1;font-weight:400;font-style:normal;color:#8b0000;white-space:pre;">31</div>
<div style="position:absolute;left:3px;top:90px;font-family:'Liberation Mono', monospace;font-size:11.67px;line-height:1;font-weight:400;font-style:normal;color:#8b0000;white-space:pre;">32</div>
<div style="position:absolute;left:3px;top:107px;font-family:'Liberation Mono', monospace;font-size:11.67px;line-height:1;font-weight:400;font-style:normal;color:#8b0000;white-space:pre;">33</div>
<div style="position:absolute;left:3px;top:124px;font-family:'Liberation Mono', monospace;font-size:11.67px;line-height:1;font-weight:400;font-style:normal;color:#8b0000;white-space:pre;">34</div>
<div style="position:absolute;left:3px;top:141px;font-family:'Liberation Mono', monospace;font-size:11.67px;line-height:1;font-weight:400;font-style:normal;color:#8b0000;white-space:pre;">35</div>
<div style="position:absolute;left:3px;top:158px;font-family:'Liberation Mono', monospace;font-size:11.67px;line-height:1;font-weight:400;font-style:normal;color:#8b0000;white-space:pre;">36</div>
<div style="position:absolute;left:3px;top:175px;font-family:'Liberation Mono', monospace;font-size:11.67px;line-height:1;font-weight:400;font-style:normal;color:#8b0000;white-space:pre;">37</div>
<div style="position:absolute;left:3px;top:192px;font-family:'Liberation Mono', monospace;font-size:11.67px;line-height:1;font-weight:400;font-style:normal;color:#8b0000;white-space:pre;">38</div>
</div>
<svg style="position:absolute;left:883px;top:372px" width="8" height="7" viewBox="0 0 8 7" shape-rendering="crispEdges"><g shape-rendering="geometricPrecision"><path d="M0.8 5.8 L4 2 L7.2 5.8" fill="none" stroke="#606060" stroke-width="1.8"/></g></svg>
<div style="position:absolute;left:880px;top:457px;width:14px;height:33px;background:#cdcdcd"></div>
<svg style="position:absolute;left:882px;top:549px" width="9" height="7" viewBox="0 0 9 7" shape-rendering="crispEdges"><g shape-rendering="geometricPrecision"><path d="M1 1 L4.5 5 L8 1" fill="none" stroke="#606060" stroke-width="2"/></g></svg>
<svg style="position:absolute;left:649px;top:565px" width="7" height="9" viewBox="0 0 7 9" shape-rendering="crispEdges"><g shape-rendering="geometricPrecision"><path d="M6 1 L2 4.5 L6 8" fill="none" stroke="#606060" stroke-width="2"/></g></svg>
<div style="position:absolute;left:661px;top:562px;width:50px;height:15px;background:#cdcdcd"></div>
<svg style="position:absolute;left:867px;top:565px" width="7" height="9" viewBox="0 0 7 9" shape-rendering="crispEdges"><g shape-rendering="geometricPrecision"><path d="M1 1 L5 4.5 L1 8" fill="none" stroke="#606060" stroke-width="2"/></g></svg>
<div style="position:absolute;left:312px;top:585px;font-family:'Liberation Sans', sans-serif;font-size:11px;line-height:1;font-weight:400;font-style:normal;color:#000;white-space:pre;letter-spacing:-0.18px;">4 changes</div>
<div style="position:absolute;left:615px;top:583px;width:39px;height:14px;background:#ffc8c8;border-right:1px solid #8a8a8a;border-bottom:1px solid #8a8a8a;box-sizing:border-box"></div>
<div style="position:absolute;left:660px;top:585px;font-family:'Liberation Sans', sans-serif;font-size:11px;line-height:1;font-weight:400;font-style:normal;color:#000;white-space:pre;">Changed</div>
<div style="position:absolute;left:714px;top:583px;width:39px;height:14px;background:#c8ffc8;border-right:1px solid #8a8a8a;border-bottom:1px solid #8a8a8a;box-sizing:border-box"></div>
<div style="position:absolute;left:759px;top:585px;font-family:'Liberation Sans', sans-serif;font-size:11px;line-height:1;font-weight:400;font-style:normal;color:#000;white-space:pre;">Inserted</div>
<div style="position:absolute;left:811px;top:583px;width:39px;height:14px;background:#c8c8c8;border-right:1px solid #8a8a8a;border-bottom:1px solid #8a8a8a;box-sizing:border-box"></div>
<div style="position:absolute;left:856px;top:585px;font-family:'Liberation Sans', sans-serif;font-size:11px;line-height:1;font-weight:400;font-style:normal;color:#000;white-space:pre;">Deleted</div>
<div style="position:absolute;left:1px;top:605px;width:543px;height:23px;border-top:1px solid #a0a0a0;border-left:1px solid #a0a0a0;border-right:1px solid #a0a0a0;box-sizing:border-box;box-shadow:inset 1px 1px 0 #fff, inset -1px 0 0 #fff"></div>
<div style="position:absolute;left:546px;top:605px;width:200px;height:23px;border-top:1px solid #a0a0a0;border-left:1px solid #a0a0a0;border-right:1px solid #a0a0a0;box-sizing:border-box;box-shadow:inset 1px 1px 0 #fff, inset -1px 0 0 #fff"></div>
<div style="position:absolute;left:748px;top:605px;width:62px;height:23px;border-top:1px solid #a0a0a0;border-left:1px solid #a0a0a0;border-right:1px solid #a0a0a0;box-sizing:border-box;box-shadow:inset 1px 1px 0 #fff, inset -1px 0 0 #fff"></div>
<div style="position:absolute;left:812px;top:605px;width:98px;height:23px;border-top:1px solid #a0a0a0;border-left:1px solid #a0a0a0;border-right:1px solid #a0a0a0;box-sizing:border-box;box-shadow:inset 1px 1px 0 #fff, inset -1px 0 0 #fff"></div>
<div style="position:absolute;left:544px;top:605px;width:2px;height:23px;background:#fafafa"></div>
<div style="position:absolute;left:746px;top:605px;width:2px;height:23px;background:#fafafa"></div>
<div style="position:absolute;left:810px;top:605px;width:2px;height:23px;background:#fafafa"></div>
<div style="position:absolute;left:817px;top:612px;font-family:'Liberation Sans', sans-serif;font-size:11px;line-height:1;font-weight:400;font-style:normal;color:#000;white-space:pre;">25.01.2018 08:53</div>
<div style="position:absolute;left:0px;top:0px;width:1px;height:630px;background:#7a7472"></div>
<div style="position:absolute;left:909px;top:31px;width:1px;height:599px;background:#7a7472"></div>
<div style="position:absolute;left:908px;top:81px;width:1px;height:547px;background:#ffffff"></div>
<div style="position:absolute;left:0px;top:628px;width:910px;height:2px;background:#7a7472"></div>
</body></html>
